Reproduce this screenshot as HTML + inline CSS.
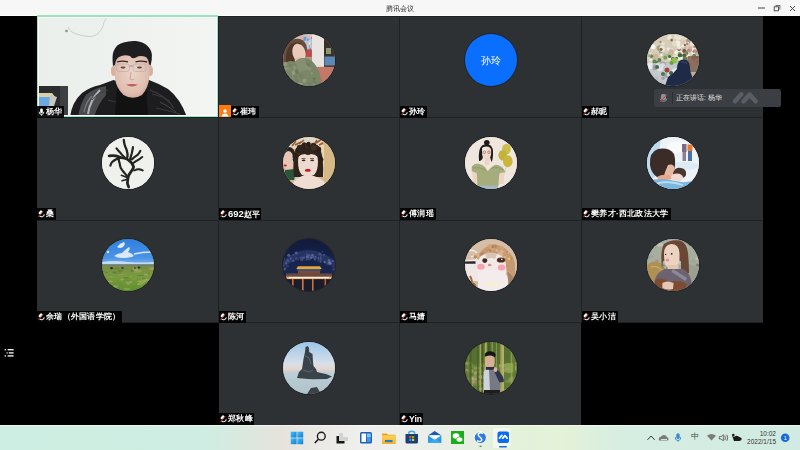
<!DOCTYPE html>
<html><head><meta charset="utf-8">
<style>
*{margin:0;padding:0;box-sizing:border-box}
html,body{width:800px;height:450px;overflow:hidden;background:#000;font-family:"Liberation Sans",sans-serif}
.abs{position:absolute}
#title{left:0;top:0;width:800px;height:16px;background:#f7f7f7;border-bottom:1.5px solid #fefefe}
#title .t{left:0;width:800px;top:3.5px;text-align:center;font-size:7px;line-height:9px;color:#1e1e1e;will-change:transform}
.cell{position:absolute;background:#2e3134}
.sep{position:absolute;background:#1f2124}
.lab{position:absolute;height:12px;background:rgba(0,0,0,0.92);color:#f2f2f2;font-size:8px;letter-spacing:0.3px;line-height:12px;white-space:nowrap;padding-left:9px;padding-right:0;overflow:hidden;will-change:transform;color:#fafafa;font-weight:bold}
.mic{position:absolute;left:1px;top:2px;width:7px;height:8px}
.av{position:absolute;width:52px;height:52px;border-radius:50%;overflow:hidden;box-shadow:0 0 0 1px #222428}
.av svg{display:block}
#task{left:0;top:425px;width:800px;height:25px;background:linear-gradient(90deg,#cdeee2 0%,#cfede2 26%,#e6e3dc 35%,#efefed 45%,#eaeee8 55%,#e4f0dc 62%,#e4f2d8 70%,#d6ede2 78%,#d1ebe2 100%)}
</style></head><body>
<div id="title" class="abs"><div class="abs t">腾讯会议</div>
<svg class="abs" style="left:0;top:0" width="800" height="15">
<line x1="758" y1="8" x2="765" y2="8" stroke="#444" stroke-width="1"/>
<rect x="774.2" y="6.8" width="4.3" height="4" fill="none" stroke="#444" stroke-width="0.9"/>
<path d="M775.6 5.5 h4.3 v4" fill="none" stroke="#444" stroke-width="0.8"/>
<path d="M790 6 l5 5 M795 6 l-5 5" stroke="#444" stroke-width="1"/>
</svg>
</div>

<!-- grid background separators -->
<div class="sep" style="left:37px;top:16px;width:726px;height:307px"></div>
<div class="sep" style="left:219px;top:323px;width:362px;height:102px"></div>

<!-- row 1 -->
<!--MAN--><div class="abs" style="left:37px;top:15px;width:181px;height:102px;overflow:hidden;background:#eef2ef">
<svg width="181" height="102" viewBox="37 15 181 102" style="display:block;filter:blur(0.5px)">
<defs>
<linearGradient id="mbg" x1="0" y1="0" x2="1" y2="0"><stop offset="0" stop-color="#eaefeb"/><stop offset="0.6" stop-color="#eff2ef"/><stop offset="1" stop-color="#f3f5f3"/></linearGradient>
<radialGradient id="face" cx="0.5" cy="0.45" r="0.6"><stop offset="0" stop-color="#ecd4ca"/><stop offset="0.75" stop-color="#e0beb0"/><stop offset="1" stop-color="#cfa494"/></radialGradient>
</defs>
<rect x="37" y="15" width="181" height="102" fill="url(#mbg)"/>
<path d="M68 27 Q70 33 80 35 Q90 38 96 35 Q103 30 104 22 Q106 18 109 16" stroke="#b4b9b6" stroke-width="0.6" fill="none"/>
<circle cx="66.5" cy="31" r="1.3" fill="#8a8e8c"/>
<!-- monitor -->
<rect x="37" y="86" width="31" height="31" fill="#2a2c2e"/>
<rect x="60" y="86" width="8" height="31" fill="#3c4042"/>
<path d="M37 93 L52 93 L56 98 L37 98Z" fill="#d8d0a8"/>
<rect x="37" y="97" width="13" height="9" fill="#6aa8e0"/>
<path d="M50 95 L57 97 L54 106 L49 106Z" fill="#c8c8c0"/>
<!-- jacket -->
<path d="M70 117 Q72 102 82 93 Q90 87 100 85 L113.5 80 L131 86 L149 80 Q160 84 168 89 Q180 98 187 117 Z" fill="#1d1d1f"/>
<path d="M78 117 Q80 104 86 95 Q94 88 106 86 L106 95 Q98 104 94 117Z" fill="#4a4b4e"/>
<path d="M88 114 Q90 100 100 90" stroke="#b0b1b4" stroke-width="2" fill="none"/>
<path d="M84 112 Q86 102 92 96" stroke="#7a7b7e" stroke-width="1.2" fill="none"/>
<path d="M92 100 Q98 92 108 90" stroke="#3c3d40" stroke-width="1" fill="none"/>
<path d="M150 90 Q166 96 174 108" stroke="#3e3f42" stroke-width="1.2" fill="none"/>
<path d="M108 100 Q120 104 128 102" stroke="#3a3b3e" stroke-width="1" fill="none"/>
<path d="M160 102 Q168 106 176 112" stroke="#48494c" stroke-width="1" fill="none"/>
<path d="M152 94 Q162 96 170 101 M156 108 Q166 110 180 114" stroke="#3a3b3e" stroke-width="1" fill="none"/>
<path d="M117 84 L131 98 L146 84 L148 117 L115 117Z" fill="#121213"/>
<!-- ears -->
<ellipse cx="113.5" cy="71" rx="2.5" ry="5" fill="#d8b0a0"/>
<ellipse cx="150.5" cy="71" rx="2.5" ry="5" fill="#d8b0a0"/>
<!-- face -->
<path d="M114.5 63 Q114.5 52 131 52 Q149.5 52 149.5 63 L149.5 76 Q148.5 88 142 95 Q133 100.5 123.5 95 Q116 88 115 78Z" fill="url(#face)"/>
<path d="M117 62 Q122 60.3 128 61.8 M135.5 61.8 Q141 60.3 147 62" stroke="#2e2624" stroke-width="1.3" fill="none"/>
<!-- hair -->
<path d="M113 66 Q111.8 56 113.5 51.6 Q116 44 123.5 42.4 Q130 40.5 136 41 Q144 42 147.6 46 Q151.5 50 151.9 54.5 Q152.2 60 150.5 66 L149 64 Q148.5 59 146 57 Q140 55 136 57.5 Q132 59.5 130 56 Q124 54 119 57 Q115.5 59 115 65 Z" fill="#1e1e20"/>

<!-- glasses -->
<rect x="116.5" y="64" width="13" height="7.5" rx="2.5" fill="none" stroke="#a8a8a8" stroke-width="0.7" opacity="0.8"/>
<rect x="133" y="64" width="13" height="7.5" rx="2.5" fill="none" stroke="#a8a8a8" stroke-width="0.7" opacity="0.8"/>
<line x1="129.5" y1="66" x2="133" y2="66" stroke="#8a8a8a" stroke-width="0.8"/>
<ellipse cx="123" cy="67.5" rx="2.5" ry="1" fill="#5a4a44"/>
<ellipse cx="139.5" cy="67.5" rx="2.5" ry="1" fill="#5a4a44"/>
<path d="M131 72 L130 79 Q132 80.5 134 79.5" stroke="#c49484" stroke-width="0.7" fill="none"/>
<path d="M126 84.8 Q132 83 138 84.8 Q132 88 126 84.8Z" fill="#bc5a58"/>
</svg>
<div class="abs" style="left:0;top:0;width:181px;height:102px;border:1px solid #98e4bb;border-top-width:2px;border-bottom-width:1.5px;box-shadow:inset 0 0 0 1px #fbfefc"></div>
</div><!--/MAN-->
<div class="cell" style="left:219px;top:17px;width:180px;height:100px"></div>
<div class="cell" style="left:400px;top:17px;width:181px;height:100px"></div>
<div class="cell" style="left:582px;top:17px;width:181px;height:100px"></div>
<!-- row 2 -->
<div class="cell" style="left:37px;top:118px;width:181px;height:102px"></div>
<div class="cell" style="left:219px;top:118px;width:180px;height:102px"></div>
<div class="cell" style="left:400px;top:118px;width:181px;height:102px"></div>
<div class="cell" style="left:582px;top:118px;width:181px;height:102px"></div>
<!-- row 3 -->
<div class="cell" style="left:37px;top:221px;width:181px;height:101px"></div>
<div class="cell" style="left:219px;top:221px;width:180px;height:101px"></div>
<div class="cell" style="left:400px;top:221px;width:181px;height:101px"></div>
<div class="cell" style="left:582px;top:221px;width:181px;height:101px"></div>
<!-- row 4 -->
<div class="cell" style="left:219px;top:323px;width:180px;height:102px"></div>
<div class="cell" style="left:400px;top:323px;width:181px;height:102px"></div>

<!-- AVATARS -->
<div id="avatars">
<div class="av" style="left:283px;top:34px;background:#a89888"><svg width="52" height="52" viewBox="0 0 52 52" style="filter:blur(0.5px);">
<rect x="0" y="0" width="52" height="52" fill="#a89888"/>
<rect x="10" y="0" width="20" height="16" fill="#c8c0c0"/>
<rect x="14.3" y="12.9" width="2.6" height="1.9" fill="#f0f0f0"/><rect x="24.9" y="7.6" width="2.1" height="1.8" fill="#f0f0f0"/><rect x="12.5" y="12.7" width="2.1" height="2.6" fill="#6a9ad8"/><rect x="23.8" y="4.7" width="2.7" height="2.4" fill="#6a9ad8"/><rect x="27.3" y="1.4" width="1.5" height="2.3" fill="#f0f0f0"/><rect x="23.7" y="14.6" width="2.6" height="2.3" fill="#e8a0b0"/><rect x="19.4" y="7.9" width="1.8" height="1.8" fill="#e0c860"/><rect x="24.9" y="14.3" width="2.9" height="2.1" fill="#8ac0e8"/><rect x="27.7" y="2.4" width="2.4" height="2.6" fill="#d87a88"/><rect x="14.1" y="5.7" width="2.6" height="2.6" fill="#f0f0f0"/><rect x="20.6" y="13.7" width="1.8" height="1.9" fill="#f0f0f0"/><rect x="26.4" y="8.1" width="2.4" height="1.6" fill="#e0c860"/><rect x="24.6" y="6.7" width="2.5" height="2.1" fill="#b8d0e8"/><rect x="25.2" y="11.3" width="1.6" height="2.5" fill="#6a9ad8"/><rect x="25.2" y="8.3" width="2.1" height="2.2" fill="#6a9ad8"/><rect x="20.0" y="5.3" width="2.8" height="2.4" fill="#8ac0e8"/><rect x="18.7" y="3.4" width="2.3" height="3.0" fill="#e8a0b0"/><rect x="15.4" y="13.9" width="2.3" height="2.1" fill="#d87a88"/><rect x="28.2" y="9.1" width="2.2" height="1.9" fill="#8ac0e8"/><rect x="22.4" y="11.2" width="2.1" height="2.8" fill="#b8d0e8"/><rect x="20.7" y="2.8" width="2.7" height="1.8" fill="#6a9ad8"/><rect x="20.2" y="6.1" width="2.3" height="2.9" fill="#f0f0f0"/><rect x="20.2" y="6.0" width="2.0" height="2.3" fill="#8ac0e8"/><rect x="25.4" y="5.6" width="2.4" height="2.7" fill="#b8d0e8"/><rect x="15.0" y="9.2" width="2.8" height="2.7" fill="#e8a0b0"/><rect x="26.5" y="14.0" width="1.5" height="2.9" fill="#6a9ad8"/><rect x="13.4" y="1.2" width="1.5" height="2.6" fill="#e0c860"/><rect x="16.6" y="12.2" width="1.8" height="1.9" fill="#e0c860"/><rect x="14.7" y="8.4" width="1.8" height="1.9" fill="#b8d0e8"/><rect x="17.0" y="10.8" width="2.2" height="1.7" fill="#d87a88"/><rect x="18.6" y="6.9" width="1.8" height="1.7" fill="#b8d0e8"/><rect x="20.7" y="3.9" width="2.4" height="2.7" fill="#6a9ad8"/><rect x="15.8" y="6.6" width="1.6" height="2.9" fill="#f0f0f0"/><rect x="24.0" y="10.5" width="2.3" height="1.8" fill="#b8d0e8"/><rect x="25.6" y="8.2" width="1.8" height="2.5" fill="#f0f0f0"/><rect x="23.5" y="12.2" width="2.5" height="2.1" fill="#b8d0e8"/><rect x="17.1" y="14.6" width="2.8" height="2.0" fill="#e8a0b0"/><rect x="13.3" y="13.8" width="1.9" height="1.7" fill="#8ac0e8"/><rect x="16.3" y="1.1" width="2.8" height="1.6" fill="#e8a0b0"/><rect x="15.7" y="13.6" width="2.2" height="2.7" fill="#e8a0b0"/>
<rect x="22.3" y="15.4" width="6.5" height="7.5" fill="#c04848"/>
<rect x="29" y="0" width="12" height="33" fill="#e8e4e0"/>
<rect x="41" y="0" width="11" height="33" fill="#3a3028"/>
<rect x="41.5" y="22.5" width="10.5" height="9" fill="#5a88b8"/>
<rect x="43" y="14" width="5" height="6" fill="#8a9a70"/>
<rect x="35" y="32.8" width="17" height="19.2" fill="#c67868"/>
<path d="M0.5 34 Q-1 18 4 9 Q10 4 17 5 Q23 7 24 14 Q23 24 20 32 Z" fill="#6a4c3a"/>
<path d="M3 30 Q2 16 8 10 Q14 7 18 9 L14 30Z" fill="#4e3628"/>
<ellipse cx="16" cy="19" rx="6.5" ry="9.5" fill="#eacbbb" transform="rotate(-15 16 19)"/>
<path d="M11.7 25 Q16 22 21.6 25 L21 30.3 L12 30.3 Z" fill="#dfbba8"/>
<path d="M0 52 L0 32 Q5 25 12 28 Q16 24 20 24 Q26 24 30 28 Q38 36 39 52 Z" fill="#7a8668"/>
<circle cx="27.3" cy="50.4" r="1.6" fill="#747e60" opacity="0.8"/><circle cx="4.7" cy="33.4" r="1.7" fill="#747e60" opacity="0.8"/><circle cx="18.3" cy="42.0" r="2.1" fill="#747e60" opacity="0.8"/><circle cx="16.3" cy="35.5" r="1.4" fill="#747e60" opacity="0.8"/><circle cx="2.7" cy="48.8" r="1.2" fill="#96a086" opacity="0.8"/><circle cx="22.3" cy="46.8" r="1.2" fill="#747e60" opacity="0.8"/><circle cx="20.4" cy="33.7" r="2.0" fill="#96a086" opacity="0.8"/><circle cx="32.2" cy="49.1" r="1.6" fill="#6c7658" opacity="0.8"/><circle cx="3.0" cy="30.4" r="1.2" fill="#6c7658" opacity="0.8"/><circle cx="9.7" cy="49.0" r="1.9" fill="#96a086" opacity="0.8"/><circle cx="12.1" cy="37.1" r="1.3" fill="#747e60" opacity="0.8"/><circle cx="16.4" cy="32.0" r="1.1" fill="#8a9678" opacity="0.8"/><circle cx="13.5" cy="37.9" r="2.2" fill="#6c7658" opacity="0.8"/><circle cx="14.3" cy="47.2" r="1.7" fill="#747e60" opacity="0.8"/><circle cx="15.9" cy="30.7" r="1.7" fill="#96a086" opacity="0.8"/><circle cx="10.8" cy="37.0" r="1.6" fill="#8a9678" opacity="0.8"/><circle cx="10.6" cy="39.1" r="1.9" fill="#96a086" opacity="0.8"/><circle cx="18.2" cy="29.3" r="1.1" fill="#8a9678" opacity="0.8"/><circle cx="30.4" cy="47.2" r="1.2" fill="#747e60" opacity="0.8"/><circle cx="13.9" cy="32.6" r="1.8" fill="#6c7658" opacity="0.8"/><circle cx="5.6" cy="45.4" r="2.1" fill="#747e60" opacity="0.8"/><circle cx="21.5" cy="46.7" r="2.0" fill="#96a086" opacity="0.8"/><circle cx="13.0" cy="44.7" r="1.2" fill="#96a086" opacity="0.8"/><circle cx="2.3" cy="29.9" r="2.2" fill="#96a086" opacity="0.8"/><circle cx="13.3" cy="45.0" r="1.5" fill="#747e60" opacity="0.8"/><circle cx="24.8" cy="30.4" r="2.2" fill="#747e60" opacity="0.8"/><circle cx="7.5" cy="31.4" r="1.7" fill="#747e60" opacity="0.8"/><circle cx="10.9" cy="43.6" r="1.6" fill="#96a086" opacity="0.8"/><circle cx="11.8" cy="33.4" r="2.0" fill="#8a9678" opacity="0.8"/><circle cx="18.1" cy="50.6" r="1.8" fill="#96a086" opacity="0.8"/><circle cx="16.1" cy="49.7" r="1.4" fill="#96a086" opacity="0.8"/><circle cx="23.3" cy="33.1" r="1.7" fill="#96a086" opacity="0.8"/><circle cx="4.8" cy="34.4" r="1.7" fill="#8a9678" opacity="0.8"/><circle cx="2.6" cy="34.4" r="1.3" fill="#8a9678" opacity="0.8"/><circle cx="26.4" cy="34.9" r="1.9" fill="#8a9678" opacity="0.8"/><circle cx="11.8" cy="43.0" r="2.0" fill="#747e60" opacity="0.8"/><circle cx="28.8" cy="39.3" r="1.1" fill="#96a086" opacity="0.8"/><circle cx="25.9" cy="30.7" r="1.2" fill="#6c7658" opacity="0.8"/><circle cx="31.6" cy="50.7" r="1.4" fill="#8a9678" opacity="0.8"/><circle cx="31.2" cy="44.6" r="1.7" fill="#6c7658" opacity="0.8"/>
<path d="M12 28 Q16 24 22 25 L24 36 L16 38Z" fill="#849070"/>
</svg></div>
<div class="av" style="left:465px;top:34px;background:#0a6efe;color:#fff;font-size:10px;line-height:53.5px;text-align:center;will-change:transform">孙玲</div>
<div class="av" style="left:647px;top:34px;background:#b8b0a0"><svg width="52" height="52" viewBox="0 0 52 52" style="filter:blur(0.5px);">
<rect width="52" height="52" fill="#b8b0a0"/>
<rect x="0" y="0" width="52" height="28" fill="#d6cdb8"/>
<circle cx="12.4" cy="14.1" r="2.8" fill="#a89a80"/><circle cx="24.7" cy="15.1" r="1.2" fill="#e8e0d0"/><circle cx="43.5" cy="6.7" r="1.5" fill="#f4efe4"/><circle cx="37.3" cy="14.1" r="2.1" fill="#c8b8a0"/><circle cx="33.2" cy="3.9" r="1.5" fill="#f0ece4"/><circle cx="48.1" cy="10.1" r="2.4" fill="#efe8d8"/><circle cx="3.3" cy="19.7" r="1.3" fill="#e8e0d0"/><circle cx="40.6" cy="21.4" r="2.1" fill="#f8f4ec"/><circle cx="37.4" cy="22.8" r="1.9" fill="#7a6c58"/><circle cx="41.6" cy="11.6" r="2.8" fill="#d8ccb4"/><circle cx="5.1" cy="3.5" r="1.7" fill="#f4efe4"/><circle cx="34.9" cy="20.3" r="2.0" fill="#f8f4ec"/><circle cx="43.3" cy="14.9" r="2.3" fill="#c8b8a0"/><circle cx="30.4" cy="23.5" r="2.8" fill="#f0ece4"/><circle cx="1.5" cy="7.3" r="2.4" fill="#e8e0d0"/><circle cx="8.5" cy="22.4" r="2.8" fill="#c8b8a0"/><circle cx="29.6" cy="18.6" r="2.3" fill="#f4efe4"/><circle cx="51.4" cy="6.9" r="1.3" fill="#e4dcc8"/><circle cx="44.4" cy="25.7" r="1.8" fill="#e4dcc8"/><circle cx="3.5" cy="23.3" r="1.7" fill="#efe8d8"/><circle cx="40.0" cy="22.7" r="2.3" fill="#efe8d8"/><circle cx="39.6" cy="9.8" r="1.8" fill="#e8e0d0"/><circle cx="45.8" cy="25.5" r="1.6" fill="#c8b8a0"/><circle cx="1.9" cy="0.2" r="2.3" fill="#e4dcc8"/><circle cx="1.6" cy="5.1" r="1.7" fill="#7a6c58"/><circle cx="13.7" cy="17.9" r="1.8" fill="#a89a80"/><circle cx="49.9" cy="23.3" r="1.9" fill="#7a6c58"/><circle cx="45.2" cy="10.0" r="2.4" fill="#e8e0d0"/><circle cx="5.3" cy="25.3" r="1.7" fill="#c8b8a0"/><circle cx="33.0" cy="18.6" r="2.0" fill="#f8f4ec"/><circle cx="13.4" cy="7.9" r="1.2" fill="#a89a80"/><circle cx="21.6" cy="15.1" r="1.9" fill="#efe8d8"/><circle cx="30.6" cy="3.5" r="2.3" fill="#f0ece4"/><circle cx="24.2" cy="17.7" r="2.3" fill="#a89a80"/><circle cx="14.5" cy="12.7" r="1.3" fill="#e8e0d0"/><circle cx="35.2" cy="25.0" r="2.3" fill="#f8f4ec"/><circle cx="15.5" cy="15.6" r="1.9" fill="#d8ccb4"/><circle cx="16.3" cy="9.6" r="1.7" fill="#e8e0d0"/><circle cx="40.9" cy="2.7" r="2.9" fill="#efe8d8"/><circle cx="35.6" cy="3.4" r="1.6" fill="#c8b8a0"/><circle cx="41.8" cy="6.2" r="2.4" fill="#d8ccb4"/><circle cx="33.8" cy="2.5" r="1.8" fill="#e8e0d0"/><circle cx="17.4" cy="21.7" r="2.7" fill="#b8c0a0"/><circle cx="50.0" cy="2.1" r="1.6" fill="#f0ece4"/><circle cx="29.6" cy="7.0" r="1.3" fill="#e4dcc8"/><circle cx="49.8" cy="8.2" r="1.5" fill="#e8e0d0"/><circle cx="14.5" cy="21.0" r="1.4" fill="#f0ece4"/><circle cx="32.2" cy="15.3" r="1.7" fill="#7a6c58"/><circle cx="41.3" cy="7.1" r="2.3" fill="#a89a80"/><circle cx="15.1" cy="14.8" r="2.9" fill="#efe8d8"/><circle cx="8.1" cy="0.1" r="3.0" fill="#e8e0d0"/><circle cx="22.6" cy="24.7" r="1.3" fill="#f4efe4"/><circle cx="23.7" cy="19.6" r="2.9" fill="#c8b8a0"/><circle cx="28.3" cy="23.1" r="2.7" fill="#e4dcc8"/><circle cx="50.5" cy="3.1" r="1.3" fill="#f4efe4"/><circle cx="47.0" cy="18.0" r="2.8" fill="#f4efe4"/><circle cx="46.8" cy="15.0" r="2.1" fill="#efe8d8"/><circle cx="6.3" cy="13.1" r="2.4" fill="#f4efe4"/><circle cx="27.3" cy="10.8" r="1.4" fill="#e8e0d0"/><circle cx="6.5" cy="25.3" r="2.1" fill="#c8b8a0"/><circle cx="40.7" cy="9.1" r="1.4" fill="#f4efe4"/><circle cx="46.2" cy="3.1" r="2.6" fill="#f4efe4"/><circle cx="47.9" cy="21.0" r="2.1" fill="#efe8d8"/><circle cx="29.7" cy="10.4" r="1.6" fill="#f8f4ec"/><circle cx="32.1" cy="13.5" r="2.1" fill="#efe8d8"/><circle cx="40.4" cy="0.0" r="2.6" fill="#efe8d8"/><circle cx="2.4" cy="1.3" r="3.0" fill="#b8c0a0"/><circle cx="44.4" cy="2.2" r="2.1" fill="#c8b8a0"/><circle cx="8.2" cy="1.9" r="2.4" fill="#7a6c58"/><circle cx="30.5" cy="9.4" r="3.0" fill="#f4efe4"/><circle cx="22.3" cy="3.3" r="2.5" fill="#efe8d8"/><circle cx="19.8" cy="2.1" r="1.3" fill="#d8ccb4"/><circle cx="24.0" cy="16.9" r="1.9" fill="#c8b8a0"/><circle cx="41.7" cy="16.2" r="1.3" fill="#7a6c58"/><circle cx="32.6" cy="19.8" r="2.0" fill="#a89a80"/><circle cx="36.1" cy="12.0" r="1.6" fill="#f4efe4"/><circle cx="14.0" cy="15.3" r="1.6" fill="#7a6c58"/><circle cx="6.8" cy="0.7" r="1.9" fill="#a89a80"/><circle cx="46.7" cy="20.6" r="1.4" fill="#f8f4ec"/><circle cx="35.9" cy="24.4" r="2.7" fill="#f0ece4"/><circle cx="27.6" cy="9.8" r="2.5" fill="#e4dcc8"/><circle cx="29.3" cy="2.7" r="2.5" fill="#e8e0d0"/><circle cx="24.6" cy="6.1" r="1.3" fill="#7a6c58"/><circle cx="4.8" cy="2.6" r="1.5" fill="#7a6c58"/><circle cx="1.2" cy="21.9" r="1.2" fill="#e4dcc8"/><circle cx="6.0" cy="12.5" r="2.2" fill="#f8f4ec"/><circle cx="41.5" cy="0.9" r="2.1" fill="#e8e0d0"/><circle cx="37.2" cy="2.8" r="2.9" fill="#e4dcc8"/><circle cx="3.2" cy="8.4" r="1.5" fill="#e8e0d0"/><circle cx="4.0" cy="26.0" r="1.6" fill="#f0ece4"/><circle cx="45.9" cy="23.6" r="1.3" fill="#7a5040"/><circle cx="45.6" cy="28.4" r="1.5" fill="#d0a0a0"/><circle cx="37.3" cy="17.0" r="2.0" fill="#7a5040"/><circle cx="51.5" cy="14.8" r="1.9" fill="#d0a0a0"/><circle cx="46.8" cy="17.4" r="1.2" fill="#7a5040"/><circle cx="42.4" cy="27.1" r="1.1" fill="#c89090"/><circle cx="48.0" cy="27.8" r="2.1" fill="#d0a0a0"/><circle cx="45.4" cy="26.3" r="1.3" fill="#c89090"/><circle cx="39.2" cy="19.2" r="2.1" fill="#5a8a4a"/><circle cx="49.6" cy="18.0" r="1.8" fill="#5a8a4a"/><circle cx="49.7" cy="19.5" r="1.7" fill="#d0a0a0"/><circle cx="40.3" cy="9.7" r="1.3" fill="#b87878"/><circle cx="48.9" cy="9.2" r="1.4" fill="#d0a0a0"/><circle cx="41.2" cy="24.1" r="1.5" fill="#c89090"/><circle cx="47.2" cy="22.2" r="1.6" fill="#c89090"/><circle cx="49.4" cy="25.4" r="1.0" fill="#d0a0a0"/><circle cx="51.9" cy="5.9" r="1.9" fill="#7a5040"/><circle cx="50.1" cy="5.2" r="2.1" fill="#c89090"/><circle cx="46.4" cy="24.2" r="2.2" fill="#b87878"/><circle cx="49.7" cy="10.3" r="1.9" fill="#c89090"/><circle cx="38.2" cy="20.2" r="2.1" fill="#b87878"/><circle cx="40.1" cy="26.5" r="1.2" fill="#5a8a4a"/><circle cx="37.5" cy="24.8" r="1.1" fill="#b87878"/><circle cx="49.3" cy="11.6" r="1.5" fill="#5a8a4a"/><circle cx="47.7" cy="12.8" r="1.4" fill="#b87878"/><circle cx="43.0" cy="16.6" r="1.8" fill="#c89090"/><circle cx="47.9" cy="16.7" r="1.7" fill="#c89090"/><circle cx="37.9" cy="11.1" r="1.1" fill="#7a5040"/><circle cx="50.2" cy="27.6" r="1.6" fill="#b87878"/><circle cx="47.2" cy="21.6" r="1.9" fill="#5a8a4a"/><circle cx="11.8" cy="28.1" r="2.3" fill="#d8d8c8"/><circle cx="32.7" cy="21.3" r="1.9" fill="#3a6a3a"/><circle cx="21.4" cy="21.4" r="1.7" fill="#a0b888"/><circle cx="2.4" cy="23.5" r="1.8" fill="#d8d8c8"/><circle cx="7.3" cy="27.7" r="1.2" fill="#d8d8c8"/><circle cx="14.8" cy="31.0" r="1.2" fill="#a0b888"/><circle cx="37.3" cy="21.7" r="1.9" fill="#3a6a3a"/><circle cx="26.0" cy="25.0" r="1.9" fill="#3a6a3a"/><circle cx="18.3" cy="23.7" r="2.0" fill="#7aa060"/><circle cx="4.3" cy="22.2" r="1.8" fill="#6a7a58"/><circle cx="29.6" cy="24.3" r="1.4" fill="#3a6a3a"/><circle cx="2.1" cy="21.6" r="1.7" fill="#a0b888"/><circle cx="9.9" cy="29.2" r="2.2" fill="#3a6a3a"/><circle cx="37.8" cy="25.4" r="1.5" fill="#5a8a48"/><circle cx="33.9" cy="21.3" r="1.8" fill="#3a6a3a"/><circle cx="27.3" cy="26.8" r="1.2" fill="#d8d8c8"/><circle cx="27.9" cy="26.8" r="2.0" fill="#d8d8c8"/><circle cx="32.6" cy="29.0" r="1.9" fill="#6a7a58"/><circle cx="34.4" cy="29.6" r="1.7" fill="#6a7a58"/><circle cx="22.7" cy="22.4" r="1.5" fill="#3a6a3a"/><circle cx="11.7" cy="30.1" r="2.2" fill="#a0b888"/><circle cx="38.0" cy="24.6" r="2.3" fill="#6a7a58"/><circle cx="12.4" cy="26.0" r="2.0" fill="#6a7a58"/><circle cx="12.0" cy="30.3" r="1.0" fill="#a0b888"/><circle cx="7.6" cy="27.6" r="2.1" fill="#5a8a48"/>
<path d="M0 30 L32 28 L32 52 L0 52 Z" fill="#c4c8cc"/>
<circle cx="20.5" cy="40.8" r="2.8" fill="#c8ccd0"/><circle cx="7.6" cy="47.2" r="1.6" fill="#b8bcc0"/><circle cx="16.0" cy="44.2" r="1.7" fill="#a0a4a8"/><circle cx="9.9" cy="44.5" r="1.8" fill="#b8bcc0"/><circle cx="24.2" cy="43.7" r="1.6" fill="#d8dce0"/><circle cx="19.3" cy="41.1" r="2.6" fill="#a0a4a8"/><circle cx="28.0" cy="37.1" r="2.9" fill="#e8eaec"/><circle cx="5.8" cy="48.9" r="3.1" fill="#c8ccd0"/><circle cx="3.0" cy="31.8" r="3.5" fill="#e8eaec"/><circle cx="7.7" cy="31.4" r="2.4" fill="#b8bcc0"/><circle cx="23.2" cy="40.7" r="3.1" fill="#d8dce0"/><circle cx="13.4" cy="48.6" r="2.3" fill="#b8bcc0"/><circle cx="15.3" cy="31.5" r="1.9" fill="#a0a4a8"/><circle cx="15.7" cy="30.5" r="3.0" fill="#a0a4a8"/><circle cx="13.2" cy="34.0" r="2.9" fill="#d8dce0"/><circle cx="12.3" cy="38.2" r="2.2" fill="#c8ccd0"/><circle cx="13.3" cy="51.3" r="2.0" fill="#b8bcc0"/><circle cx="12.3" cy="48.8" r="1.9" fill="#c8ccd0"/><circle cx="7.9" cy="33.8" r="2.5" fill="#a0a4a8"/><circle cx="19.8" cy="33.1" r="1.8" fill="#c8ccd0"/><circle cx="15.7" cy="31.3" r="2.3" fill="#d8dce0"/><circle cx="10.9" cy="30.7" r="2.0" fill="#d8dce0"/><circle cx="3.1" cy="40.9" r="2.0" fill="#b8bcc0"/><circle cx="12.9" cy="34.2" r="2.7" fill="#e8eaec"/><circle cx="11.7" cy="32.7" r="3.1" fill="#d8dce0"/>
<circle cx="20" cy="36" r="2.5" fill="#a84040"/><circle cx="24" cy="39" r="2" fill="#3a6a3a"/><circle cx="16" cy="40" r="2" fill="#4a7a48"/><circle cx="10" cy="33" r="2" fill="#4a6a40"/>
<rect x="41" y="22" width="11" height="16" fill="#7a5a48" opacity="0.75"/>
<path d="M18 52 L21 43 Q27 39 30 35 Q30 25.5 36.5 25.5 Q42.5 26 42.8 32 Q43 38 45 42 L47 52Z" fill="#1f2a48"/>
<path d="M34 28 Q38 27 40 30" stroke="#3a4a70" stroke-width="1.2" fill="none"/>
<circle cx="27.5" cy="26.5" r="3" fill="#90c050"/><circle cx="24.5" cy="29" r="2" fill="#6aa040"/>
</svg></div>
<div class="av" style="left:102px;top:137px;background:#eef1ec"><svg width="52" height="52" viewBox="0 0 52 52" style="filter:blur(0.5px);">
<rect width="52" height="52" fill="#eef1ec"/>
<g stroke="#242422" stroke-linecap="round" stroke-linejoin="round" fill="none">
<path d="M26.7 50 Q25 46 25.5 44.5 Q26 40 26.7 38.3 Q28.5 35.5 29.8 33.5 Q31.5 31 31.6 29.8 Q30 26 28.6 24.9 Q26 22.5 24.3 21.8 Q21 20.6 18.8 20.6 Q16 19.5 13.9 18.8 Q10 18.5 7.2 18.8" stroke-width="2.8"/>
<path d="M18.8 20.6 Q13 22 10.2 24.9 Q8.8 26.5 8.4 28.6" stroke-width="2.2"/>
<path d="M16.5 21 Q17 25 17.6 26.1 Q18 29 18.8 31 Q20.5 34 22.4 35.9 Q24.5 38.5 26.1 40.2" stroke-width="2.2"/>
<path d="M21.8 2.9 Q22 6 23 9 Q24.5 12 24.9 13.9 Q25.8 17 25.5 19.4 Q25 21 24.3 21.8" stroke-width="2.3"/>
<path d="M28 22.4 Q29 19 29.8 16.3 Q30.5 13 31 10.2" stroke-width="2.2"/>
<path d="M14.5 11.4 Q16.5 14 18.8 16.3 Q20.5 18.5 22.4 20" stroke-width="2.2"/>
<path d="M29.8 22.4 Q33 19.5 35.9 17.6 Q37.5 15.5 38.3 13.9" stroke-width="2.2"/>
<path d="M31 26.1 Q34 24 37.1 22.4 Q39 21 40.2 20" stroke-width="2.1"/>
<path d="M32.2 33.5 Q35 32 37.1 32.2 Q39.5 32.5 40.8 33.5" stroke-width="1.9"/>
<path d="M19.4 38.3 Q22 39.5 24.3 40.2" stroke-width="1.6"/>
<path d="M20 43.8 Q23 43 25.5 42" stroke-width="1.5"/>
</g>
</svg></div>
<div class="av" style="left:283px;top:137px;background:#d4b88c"><svg width="52" height="52" viewBox="0 0 52 52" style="filter:blur(0.5px);">
<rect width="52" height="52" fill="#d4b88c"/>
<rect x="0" y="0" width="52" height="12" fill="#e2d6c4"/>
<rect x="37.8" y="5" width="14.2" height="38" fill="#d6b886"/>
<rect x="38" y="8" width="3" height="32" fill="#e8d4b0"/>
<path d="M9 9 L13 4 M12 8 L18 5 M16 7 L21 3 M31 8 L34 3 M33 6 L39 2 M36 8 L40 6" stroke="#9a5a34" stroke-width="1.6"/>
<ellipse cx="6" cy="17" rx="6" ry="7" fill="#2e221c"/>
<ellipse cx="5.5" cy="24" rx="5.5" ry="10" fill="#e6c6b6"/>
<ellipse cx="2.2" cy="28.5" rx="1.6" ry="1" fill="#c82020"/>
<path d="M2 33 L12 32 L12 43 L2 43 Z" fill="#2a5438"/>
<path d="M12 36 L15 38 L15 46 L11 46Z" fill="#c8c8c4"/>
<path d="M11 40 Q9 22 13 12 Q24 5 37 11 Q41 22 40 40 Z" fill="#2e221a"/>
<circle cx="30.3" cy="8.5" r="2.8" fill="#3e2e24"/><circle cx="31.2" cy="9.7" r="2.8" fill="#30241c"/><circle cx="31.5" cy="8.7" r="1.9" fill="#2a1f18"/><circle cx="36.4" cy="18.0" r="1.9" fill="#30241c"/><circle cx="13.5" cy="23.5" r="2.1" fill="#2a1f18"/><circle cx="13.0" cy="16.3" r="2.0" fill="#3e2e24"/><circle cx="22.9" cy="9.2" r="3.0" fill="#30241c"/><circle cx="15.3" cy="14.9" r="3.0" fill="#30241c"/><circle cx="16.1" cy="10.5" r="2.4" fill="#3e2e24"/><circle cx="29.8" cy="10.1" r="3.0" fill="#30241c"/><circle cx="38.2" cy="22.6" r="2.2" fill="#2a1f18"/><circle cx="21.1" cy="7.3" r="2.1" fill="#2a1f18"/><circle cx="17.1" cy="10.9" r="1.8" fill="#3e2e24"/><circle cx="32.3" cy="12.3" r="2.2" fill="#2a1f18"/><circle cx="24.2" cy="8.5" r="2.4" fill="#3e2e24"/><circle cx="14.5" cy="16.2" r="2.9" fill="#3e2e24"/><circle cx="19.3" cy="9.8" r="2.5" fill="#2a1f18"/><circle cx="19.4" cy="9.2" r="1.8" fill="#30241c"/><circle cx="33.3" cy="11.1" r="2.9" fill="#30241c"/><circle cx="35.3" cy="12.3" r="2.9" fill="#2a1f18"/><circle cx="25.6" cy="6.8" r="2.1" fill="#2a1f18"/><circle cx="12.4" cy="18.8" r="2.8" fill="#2a1f18"/><circle cx="11.6" cy="22.5" r="1.9" fill="#2a1f18"/><circle cx="25.5" cy="8.3" r="2.0" fill="#2a1f18"/><circle cx="37.3" cy="20.5" r="2.2" fill="#2a1f18"/><circle cx="16.9" cy="10.3" r="2.6" fill="#3e2e24"/><circle cx="33.2" cy="9.7" r="2.0" fill="#30241c"/><circle cx="12.6" cy="20.2" r="2.9" fill="#30241c"/><circle cx="15.2" cy="13.2" r="2.8" fill="#2a1f18"/><circle cx="30.7" cy="10.7" r="3.0" fill="#3e2e24"/><circle cx="12.8" cy="22.6" r="2.8" fill="#30241c"/><circle cx="37.4" cy="23.3" r="2.0" fill="#2a1f18"/><circle cx="13.2" cy="19.1" r="2.0" fill="#2a1f18"/><circle cx="17.1" cy="11.4" r="3.0" fill="#30241c"/>
<path d="M15 24 Q15 14 25 14.5 Q35 14 35 24 Q35 34 31 38 Q25 41 19 38 Q15 34 15 24Z" fill="#eedad0"/>
<path d="M15 20 Q18 13 25 13 Q32 13 35 20 Q32 17 28 17 Q25 19 22 17 Q18 17 15 20Z" fill="#30241c"/>
<path d="M18.5 21.5 h4 M27 21.5 h4" stroke="#5a4038" stroke-width="0.8"/>
<ellipse cx="20.6" cy="23.3" rx="1.9" ry="0.9" fill="#3a2a24"/><ellipse cx="29.2" cy="23.3" rx="1.9" ry="0.9" fill="#3a2a24"/>
<ellipse cx="24.8" cy="33.4" rx="3" ry="1.3" fill="#c41818"/>
<path d="M8 52 Q10 42 19 39 L31 39 Q42 42 46 52 Z" fill="#f0dcd0"/>
</svg></div>
<div class="av" style="left:465px;top:137px;background:#efe7de"><svg width="52" height="52" viewBox="0 0 52 52" style="filter:blur(0.5px);">
<rect width="52" height="52" fill="#efe7de"/>
<path d="M38 29 L35 38 M41 29 L40 36" stroke="#c8b8a8" stroke-width="0.5"/>
<ellipse cx="41.5" cy="12" rx="4.4" ry="5.2" fill="#cdbd4a"/>
<ellipse cx="37.8" cy="18.2" rx="4.4" ry="5.2" fill="#c3b23c"/>
<ellipse cx="42.8" cy="24.2" rx="4.8" ry="6" fill="#c9b63e"/>
<ellipse cx="21.8" cy="5.5" rx="2.8" ry="2.6" fill="#1c1a1a"/>
<path d="M14 24 Q13 12 17 8.5 Q21 6.5 25 8 Q28.5 10 28 18 Q27.5 24 26.5 25 L25 20 L18 20 Q17 24 14 24Z" fill="#1e1b1b"/>
<path d="M17 14 Q17 9.5 21.5 9.5 Q26.2 9.5 26.2 14 L26 18 Q25 21.8 21.5 21.8 Q18 21.8 17.2 18Z" fill="#f0dacb"/>
<path d="M17 11 Q19.5 9 22 11 L18.5 16 Z" fill="#f2eeea"/>
<circle cx="19.3" cy="15.2" r="1.3" fill="none" stroke="#8a5a44" stroke-width="0.6"/><circle cx="24" cy="15.2" r="1.3" fill="none" stroke="#8a5a44" stroke-width="0.6"/>
<rect x="19.5" y="21" width="5" height="7" fill="#eed4c4"/>
<path d="M6.7 29.5 Q9 26.5 12.9 26.6 Q18 28 20 30 Q21.5 33 22.9 34 Q25 31.5 28 29 Q30 27.5 32.8 27.9 Q38 29 40.3 35.3 L35 36 L34 40 L33.5 49 L11.7 49 L11.5 40 L10 36 L6.7 34Z" fill="#a5ad7d"/>
<path d="M7 34.5 L11.8 36 L12.5 47.7 L8.5 47.7Z" fill="#eed2c2"/>
<path d="M34.5 36.5 L39.5 36 L38.5 47 L34 47Z" fill="#eed2c2"/>
<path d="M8 31 Q14 29.5 21 33 M26 31.5 Q32 29 39 33" stroke="#8e9668" stroke-width="0.9" fill="none"/>
<rect x="13" y="48.5" width="20" height="3.5" fill="#a6b6c4"/>
</svg></div>
<div class="av" style="left:647px;top:137px;background:#eef3f7"><svg width="52" height="52" viewBox="0 0 52 52" style="filter:blur(0.5px);">
<rect width="52" height="52" fill="#eef3f7"/>
<path d="M0 8 Q6 2 14 2 L8 40 L0 44 Z" fill="#bcdaf0"/>
<ellipse cx="30" cy="10" rx="10" ry="6" fill="#f8fafc"/>
<rect x="35" y="7" width="4.5" height="8" fill="#7a6e7e"/><rect x="35.5" y="15" width="3.5" height="9" fill="#8a8290"/>
<rect x="40.5" y="7.5" width="5" height="6.5" fill="#e87a34"/><rect x="41" y="14" width="4" height="10" fill="#4a70a8"/>
<ellipse cx="36" cy="29" rx="16" ry="4" fill="#dcebf4"/>
<path d="M3 28 Q2 15 11 12 Q22 10 27 17 Q29 24 27.5 32 Q26 38 22 40 L10 40 Q4 36 3 28Z" fill="#3c2c28"/>
<path d="M21 28 Q27 26 27.8 32 Q27 38 24 41 L16 42 Q18 34 21 28Z" fill="#e6b8a2"/>
<path d="M10 40 Q14 37 22 38 L26 42 L12 44Z" fill="#e8a888"/>
<path d="M26 36 Q28 30 34 31 Q40 32 39 38 Q38 41 34 41 L28 41Z" fill="#4a3630"/>
<ellipse cx="30" cy="40.5" rx="6" ry="4" fill="#f2dad0"/>
<path d="M0 44 Q14 40 28 44 Q40 47 52 42 L52 52 L0 52 Z" fill="#7ab6de"/>
<path d="M8 47 Q20 43 36 48" stroke="#c0e0f2" stroke-width="1.8" fill="none"/>
</svg></div>
<div class="av" style="left:102px;top:239px;background:#5f9030"><svg width="52" height="52" viewBox="0 0 52 52" style="filter:blur(0.5px);">
<defs><linearGradient id="sky8" x1="0" y1="0" x2="0" y2="1"><stop offset="0" stop-color="#2f7ee2"/><stop offset="0.7" stop-color="#4a94e6"/><stop offset="1" stop-color="#8cc0ee"/></linearGradient>
<linearGradient id="gr8" x1="0" y1="0" x2="0" y2="1"><stop offset="0" stop-color="#7a8a48"/><stop offset="0.4" stop-color="#7a9a40"/><stop offset="1" stop-color="#5f9030"/></linearGradient></defs>
<rect width="52" height="27" fill="url(#sky8)"/>
<path d="M12 17 Q16 14 20 14 Q24 10 27 8 Q29 9 26 13 Q30 14 32 17 Q28 19 20 19 Q15 19 12 17Z" fill="#eaf2fa" opacity="0.9"/>
<path d="M15 8 Q18 4 22 3 Q24 5 21 8 Q18 10 15 8Z" fill="#e0ecf8"/>
<path d="M32 15 Q40 13 50 13" stroke="#d8e6f6" stroke-width="1.4" fill="none"/>
<circle cx="6" cy="13" r="1.3" fill="#d0e0f4"/>
<path d="M0 23 Q12 21 26 23 Q40 24 52 23 L52 26 L0 26Z" fill="#d4e4f2" opacity="0.85"/>
<rect x="0" y="25.4" width="52" height="1.2" fill="#4a5a40"/>
<rect x="0" y="26.6" width="52" height="25.4" fill="url(#gr8)"/>
<ellipse cx="11.8" cy="51.1" rx="1.8" ry="1.2" fill="#8aa848" opacity="0.7"/><ellipse cx="7.1" cy="47.5" rx="2.8" ry="1.0" fill="#8aa848" opacity="0.7"/><ellipse cx="23.9" cy="38.9" rx="2.7" ry="0.8" fill="#5a8030" opacity="0.7"/><ellipse cx="4.7" cy="33.6" rx="1.5" ry="0.8" fill="#5a8030" opacity="0.7"/><ellipse cx="24.7" cy="49.9" rx="3.3" ry="1.2" fill="#8aa848" opacity="0.7"/><ellipse cx="51.6" cy="29.5" rx="3.1" ry="0.9" fill="#8aa848" opacity="0.7"/><ellipse cx="17.6" cy="44.6" rx="2.7" ry="1.2" fill="#6a9038" opacity="0.7"/><ellipse cx="30.2" cy="31.4" rx="1.7" ry="1.5" fill="#5a8030" opacity="0.7"/><ellipse cx="36.5" cy="31.6" rx="3.7" ry="1.0" fill="#a0a860" opacity="0.7"/><ellipse cx="45.8" cy="34.9" rx="2.4" ry="1.4" fill="#6a9038" opacity="0.7"/><ellipse cx="8.2" cy="42.4" rx="2.8" ry="0.9" fill="#9ab058" opacity="0.7"/><ellipse cx="49.4" cy="48.2" rx="2.8" ry="0.8" fill="#6a9038" opacity="0.7"/><ellipse cx="18.5" cy="34.8" rx="3.1" ry="1.3" fill="#a0a860" opacity="0.7"/><ellipse cx="47.5" cy="41.1" rx="2.4" ry="1.4" fill="#9ab058" opacity="0.7"/><ellipse cx="17.8" cy="34.4" rx="2.6" ry="0.9" fill="#5a8030" opacity="0.7"/><ellipse cx="9.1" cy="37.5" rx="1.9" ry="1.2" fill="#8aa848" opacity="0.7"/><ellipse cx="10.5" cy="46.4" rx="2.3" ry="0.6" fill="#5a8030" opacity="0.7"/><ellipse cx="17.8" cy="32.1" rx="2.6" ry="0.8" fill="#5a8030" opacity="0.7"/><ellipse cx="29.3" cy="37.8" rx="1.7" ry="0.7" fill="#8aa848" opacity="0.7"/><ellipse cx="1.8" cy="43.9" rx="3.4" ry="1.1" fill="#6a9038" opacity="0.7"/><ellipse cx="42.0" cy="40.1" rx="3.3" ry="1.5" fill="#8aa848" opacity="0.7"/><ellipse cx="9.9" cy="49.9" rx="2.4" ry="1.2" fill="#8aa848" opacity="0.7"/><ellipse cx="38.7" cy="36.4" rx="3.9" ry="0.6" fill="#5a8030" opacity="0.7"/><ellipse cx="10.9" cy="49.0" rx="1.6" ry="1.5" fill="#a0a860" opacity="0.7"/><ellipse cx="8.9" cy="36.1" rx="2.6" ry="0.7" fill="#6a9038" opacity="0.7"/><ellipse cx="31.5" cy="39.9" rx="2.7" ry="0.7" fill="#8aa848" opacity="0.7"/><ellipse cx="5.6" cy="45.3" rx="3.1" ry="1.2" fill="#a0a860" opacity="0.7"/><ellipse cx="37.7" cy="45.2" rx="2.7" ry="1.0" fill="#9ab058" opacity="0.7"/><ellipse cx="23.7" cy="29.2" rx="1.6" ry="0.7" fill="#6a9038" opacity="0.7"/><ellipse cx="37.7" cy="45.0" rx="3.0" ry="0.6" fill="#9ab058" opacity="0.7"/><ellipse cx="43.1" cy="40.7" rx="3.9" ry="1.3" fill="#a0a860" opacity="0.7"/><ellipse cx="26.1" cy="44.9" rx="2.0" ry="0.8" fill="#a0a860" opacity="0.7"/><ellipse cx="20.0" cy="40.5" rx="2.0" ry="0.9" fill="#9ab058" opacity="0.7"/><ellipse cx="47.3" cy="45.8" rx="3.8" ry="1.5" fill="#6a9038" opacity="0.7"/><ellipse cx="32.9" cy="29.9" rx="2.5" ry="1.3" fill="#9ab058" opacity="0.7"/><ellipse cx="26.8" cy="43.0" rx="3.9" ry="1.3" fill="#9ab058" opacity="0.7"/><ellipse cx="33.9" cy="30.6" rx="2.7" ry="0.9" fill="#a0a860" opacity="0.7"/><ellipse cx="44.0" cy="35.5" rx="2.2" ry="1.2" fill="#a0a860" opacity="0.7"/><ellipse cx="48.7" cy="45.5" rx="3.6" ry="1.1" fill="#9ab058" opacity="0.7"/><ellipse cx="35.0" cy="32.7" rx="3.6" ry="1.1" fill="#8aa848" opacity="0.7"/><ellipse cx="14.0" cy="29.6" rx="3.3" ry="0.8" fill="#5a8030" opacity="0.7"/><ellipse cx="40.6" cy="43.0" rx="3.6" ry="1.5" fill="#9ab058" opacity="0.7"/><ellipse cx="41.8" cy="40.1" rx="2.2" ry="1.4" fill="#5a8030" opacity="0.7"/><ellipse cx="12.7" cy="33.9" rx="2.1" ry="1.1" fill="#5a8030" opacity="0.7"/><ellipse cx="13.0" cy="47.5" rx="3.0" ry="1.3" fill="#9ab058" opacity="0.7"/><ellipse cx="25.8" cy="30.5" rx="1.8" ry="0.7" fill="#6a9038" opacity="0.7"/><ellipse cx="40.6" cy="51.8" rx="3.8" ry="1.3" fill="#6a9038" opacity="0.7"/><ellipse cx="1.1" cy="32.6" rx="2.2" ry="0.7" fill="#5a8030" opacity="0.7"/><ellipse cx="45.2" cy="49.7" rx="3.8" ry="0.7" fill="#a0a860" opacity="0.7"/><ellipse cx="18.6" cy="51.5" rx="1.7" ry="1.3" fill="#8aa848" opacity="0.7"/><ellipse cx="44.7" cy="43.7" rx="2.4" ry="1.3" fill="#6a9038" opacity="0.7"/><ellipse cx="37.7" cy="42.4" rx="2.3" ry="0.9" fill="#9ab058" opacity="0.7"/><ellipse cx="50.3" cy="29.6" rx="3.8" ry="1.4" fill="#a0a860" opacity="0.7"/><ellipse cx="18.1" cy="31.8" rx="2.1" ry="1.0" fill="#5a8030" opacity="0.7"/><ellipse cx="37.8" cy="29.6" rx="2.8" ry="0.7" fill="#6a9038" opacity="0.7"/><ellipse cx="17.5" cy="32.8" rx="3.9" ry="0.7" fill="#6a9038" opacity="0.7"/><ellipse cx="42.9" cy="41.4" rx="2.3" ry="1.4" fill="#a0a860" opacity="0.7"/><ellipse cx="24.9" cy="41.5" rx="3.8" ry="1.5" fill="#6a9038" opacity="0.7"/><ellipse cx="11.7" cy="33.2" rx="1.9" ry="0.7" fill="#5a8030" opacity="0.7"/><ellipse cx="3.2" cy="49.3" rx="3.0" ry="1.2" fill="#5a8030" opacity="0.7"/>
<ellipse cx="9.5" cy="29.2" rx="1.4" ry="1.1" fill="#2a2a22"/><ellipse cx="20.5" cy="29" rx="1.3" ry="1" fill="#3a3a30"/><ellipse cx="33" cy="29" rx="1.2" ry="1" fill="#5a5040"/><ellipse cx="37" cy="28.4" rx="1.3" ry="1" fill="#2a2a22"/>
</svg></div>
<div class="av" style="left:283px;top:239px;background:#1a2448"><svg width="52" height="52" viewBox="0 0 52 52" style="filter:blur(0.5px);">
<defs><linearGradient id="sky9" x1="0" y1="0" x2="0" y2="1"><stop offset="0" stop-color="#111a3c"/><stop offset="1" stop-color="#1e2e5c"/></linearGradient></defs>
<rect width="52" height="52" fill="url(#sky9)"/>
<path d="M0 22 Q14 10 26 11 Q40 12 52 22 L52 30 Q40 20 26 19 Q12 19 0 29Z" fill="#34447a" opacity="0.55"/>
<circle cx="24.1" cy="15.6" r="1.5" fill="#5a6a98" opacity="0.4"/><circle cx="24.1" cy="17.9" r="1.2" fill="#8898c0" opacity="0.5"/><circle cx="32.1" cy="20.4" r="1.3" fill="#4a5a88" opacity="0.7"/><circle cx="22.0" cy="17.6" r="0.7" fill="#5a6a98" opacity="0.3"/><circle cx="26.3" cy="20.3" r="1.4" fill="#4a5a88" opacity="0.6"/><circle cx="46.1" cy="21.4" r="1.5" fill="#7080b0" opacity="0.6"/><circle cx="37.7" cy="18.1" r="0.8" fill="#7080b0" opacity="0.5"/><circle cx="17.8" cy="18.2" r="0.5" fill="#5a6a98" opacity="0.7"/><circle cx="2.8" cy="21.0" r="0.5" fill="#4a5a88" opacity="0.6"/><circle cx="44.2" cy="24.6" r="1.6" fill="#5a6a98" opacity="0.3"/><circle cx="30.1" cy="18.7" r="0.5" fill="#5a6a98" opacity="0.4"/><circle cx="47.7" cy="22.8" r="1.1" fill="#4a5a88" opacity="0.5"/><circle cx="10.3" cy="21.8" r="1.3" fill="#7080b0" opacity="0.4"/><circle cx="31.7" cy="18.3" r="1.6" fill="#5a6a98" opacity="0.4"/><circle cx="35.5" cy="21.4" r="1.3" fill="#5a6a98" opacity="0.3"/><circle cx="36.7" cy="14.9" r="1.5" fill="#7080b0" opacity="0.4"/><circle cx="26.3" cy="16.2" r="1.1" fill="#5a6a98" opacity="0.6"/><circle cx="5.7" cy="16.3" r="1.5" fill="#8898c0" opacity="0.5"/><circle cx="20.9" cy="20.9" r="0.5" fill="#8898c0" opacity="0.3"/><circle cx="5.8" cy="21.7" r="0.7" fill="#8898c0" opacity="0.4"/><circle cx="4.6" cy="21.7" r="1.4" fill="#5a6a98" opacity="0.5"/><circle cx="29.1" cy="16.0" r="1.0" fill="#8898c0" opacity="0.6"/><circle cx="12.9" cy="18.8" r="0.8" fill="#4a5a88" opacity="0.5"/><circle cx="49.7" cy="22.0" r="1.1" fill="#7080b0" opacity="0.6"/><circle cx="8.9" cy="21.9" r="0.6" fill="#7080b0" opacity="0.4"/><circle cx="8.5" cy="18.9" r="0.6" fill="#7080b0" opacity="0.3"/><circle cx="3.2" cy="24.1" r="1.2" fill="#8898c0" opacity="0.4"/><circle cx="25.0" cy="19.6" r="0.8" fill="#5a6a98" opacity="0.6"/><circle cx="15.4" cy="20.5" r="0.7" fill="#4a5a88" opacity="0.5"/><circle cx="41.7" cy="23.1" r="1.2" fill="#8898c0" opacity="0.6"/><circle cx="45.8" cy="21.6" r="0.6" fill="#7080b0" opacity="0.4"/><circle cx="32.7" cy="17.7" r="0.6" fill="#7080b0" opacity="0.6"/><circle cx="10.6" cy="16.0" r="1.1" fill="#5a6a98" opacity="0.4"/><circle cx="25.1" cy="17.4" r="1.5" fill="#5a6a98" opacity="0.7"/><circle cx="1.5" cy="30.5" r="1.1" fill="#5a6a98" opacity="0.7"/><circle cx="29.8" cy="16.8" r="1.6" fill="#5a6a98" opacity="0.6"/><circle cx="37.5" cy="22.9" r="1.0" fill="#4a5a88" opacity="0.7"/><circle cx="37.8" cy="22.1" r="1.2" fill="#5a6a98" opacity="0.4"/><circle cx="45.7" cy="23.6" r="1.3" fill="#4a5a88" opacity="0.7"/><circle cx="1.9" cy="29.6" r="1.2" fill="#5a6a98" opacity="0.6"/><circle cx="21.1" cy="18.8" r="1.2" fill="#7080b0" opacity="0.3"/><circle cx="1.6" cy="25.0" r="1.2" fill="#4a5a88" opacity="0.3"/><circle cx="40.3" cy="17.7" r="0.5" fill="#4a5a88" opacity="0.5"/><circle cx="50.8" cy="30.3" r="1.6" fill="#7080b0" opacity="0.3"/><circle cx="18.1" cy="18.1" r="0.7" fill="#7080b0" opacity="0.3"/><circle cx="2.7" cy="28.8" r="0.6" fill="#5a6a98" opacity="0.4"/><circle cx="38.5" cy="16.0" r="0.9" fill="#5a6a98" opacity="0.4"/><circle cx="13.3" cy="19.6" r="1.1" fill="#7080b0" opacity="0.3"/><circle cx="13.2" cy="13.1" r="1.1" fill="#4a5a88" opacity="0.3"/><circle cx="13.1" cy="14.1" r="1.4" fill="#7080b0" opacity="0.6"/><circle cx="35.4" cy="19.0" r="0.7" fill="#8898c0" opacity="0.6"/><circle cx="46.9" cy="24.2" r="1.5" fill="#8898c0" opacity="0.7"/><circle cx="4.9" cy="21.6" r="1.2" fill="#4a5a88" opacity="0.5"/><circle cx="45.8" cy="25.1" r="1.5" fill="#4a5a88" opacity="0.4"/><circle cx="14.4" cy="14.5" r="1.1" fill="#4a5a88" opacity="0.5"/><circle cx="17.1" cy="18.7" r="0.6" fill="#5a6a98" opacity="0.4"/><circle cx="28.3" cy="18.7" r="1.2" fill="#7080b0" opacity="0.7"/><circle cx="4.5" cy="27.1" r="1.6" fill="#4a5a88" opacity="0.4"/><circle cx="28.2" cy="16.6" r="1.1" fill="#4a5a88" opacity="0.4"/><circle cx="37.8" cy="19.8" r="1.3" fill="#5a6a98" opacity="0.5"/><circle cx="0.2" cy="26.7" r="0.7" fill="#8898c0" opacity="0.3"/><circle cx="7.8" cy="20.2" r="0.7" fill="#5a6a98" opacity="0.5"/><circle cx="41.1" cy="15.9" r="0.9" fill="#7080b0" opacity="0.5"/><circle cx="18.6" cy="20.7" r="1.5" fill="#7080b0" opacity="0.4"/><circle cx="20.0" cy="18.9" r="1.5" fill="#7080b0" opacity="0.3"/><circle cx="35.6" cy="22.3" r="0.5" fill="#4a5a88" opacity="0.5"/><circle cx="39.2" cy="12.4" r="0.6" fill="#8898c0" opacity="0.4"/><circle cx="23.5" cy="20.4" r="1.2" fill="#7080b0" opacity="0.4"/><circle cx="7.6" cy="19.1" r="0.6" fill="#8898c0" opacity="0.7"/><circle cx="1.4" cy="19.8" r="0.7" fill="#5a6a98" opacity="0.5"/>
<path d="M13.2 30 L15 27.2 L37 27.2 L38.8 30Z" fill="#e8a434"/>
<rect x="14.5" y="30" width="23" height="1.8" fill="#3a5a8a"/>
<rect x="15" y="31.8" width="22" height="3.5" fill="#7a4a3a"/>
<rect x="3" y="34.5" width="46" height="3" fill="#6a4a40"/>
<rect x="3" y="37.5" width="46" height="2.8" fill="#f0b070"/>
<rect x="6" y="38" width="40" height="1.2" fill="#fff0d8"/>
<rect x="0" y="40.3" width="52" height="11.7" fill="#1a1c2a"/>
<rect x="9" y="40" width="1.6" height="12" fill="#c86a40"/><rect x="19" y="40" width="1.6" height="12" fill="#d07848"/><rect x="29" y="40" width="1.6" height="12" fill="#c87040"/><rect x="41.5" y="40" width="1.6" height="12" fill="#b86038"/>
</svg></div>
<div class="av" style="left:465px;top:239px;background:#d6bea6"><svg width="52" height="52" viewBox="0 0 52 52" style="filter:blur(0.5px);">
<rect width="52" height="52" fill="#d6bea6"/>
<path d="M4 12 Q8 10 12 14 M6 18 Q10 16 12 20" stroke="#f4ece0" stroke-width="1.5" fill="none"/>
<path d="M11 30 Q10 10 28 5 Q46 8 50 24 L50 40 Q44 30 40 32 L14 32Z" fill="#c79a72"/>
<circle cx="33.0" cy="12.3" r="1.6" fill="#cfa47c"/><circle cx="28.4" cy="10.6" r="1.3" fill="#cfa47c"/><circle cx="14.7" cy="22.4" r="1.1" fill="#a87a58"/><circle cx="10.7" cy="21.3" r="1.6" fill="#dab48e"/><circle cx="26.0" cy="7.0" r="1.3" fill="#cfa47c"/><circle cx="39.0" cy="13.3" r="1.1" fill="#cfa47c"/><circle cx="42.4" cy="27.1" r="1.0" fill="#b88a62"/><circle cx="21.0" cy="16.6" r="1.9" fill="#a87a58"/><circle cx="37.5" cy="19.1" r="1.7" fill="#dab48e"/><circle cx="27.4" cy="15.3" r="1.6" fill="#cfa47c"/><circle cx="46.2" cy="19.7" r="1.2" fill="#b88a62"/><circle cx="30.5" cy="7.2" r="1.7" fill="#b88a62"/><circle cx="15.6" cy="17.0" r="1.4" fill="#cfa47c"/><circle cx="12.7" cy="17.7" r="1.1" fill="#cfa47c"/><circle cx="37.8" cy="26.5" r="1.3" fill="#dab48e"/><circle cx="27.5" cy="8.5" r="1.1" fill="#cfa47c"/><circle cx="38.8" cy="22.3" r="1.3" fill="#cfa47c"/><circle cx="39.9" cy="18.2" r="1.3" fill="#dab48e"/><circle cx="18.0" cy="14.2" r="1.0" fill="#a87a58"/><circle cx="20.7" cy="15.9" r="1.4" fill="#cfa47c"/><circle cx="24.1" cy="6.9" r="1.7" fill="#cfa47c"/><circle cx="43.6" cy="13.4" r="1.3" fill="#dab48e"/><circle cx="32.2" cy="16.4" r="1.5" fill="#dab48e"/><circle cx="37.5" cy="23.6" r="1.5" fill="#a87a58"/><circle cx="31.8" cy="11.2" r="1.2" fill="#dab48e"/><circle cx="10.4" cy="17.7" r="1.8" fill="#b88a62"/><circle cx="27.5" cy="15.3" r="1.3" fill="#cfa47c"/><circle cx="15.9" cy="19.2" r="2.0" fill="#dab48e"/><circle cx="12.5" cy="15.9" r="1.8" fill="#dab48e"/><circle cx="23.9" cy="13.9" r="1.8" fill="#dab48e"/><circle cx="26.4" cy="8.9" r="1.9" fill="#cfa47c"/><circle cx="37.6" cy="17.6" r="1.0" fill="#cfa47c"/><circle cx="36.8" cy="12.5" r="1.8" fill="#dab48e"/><circle cx="18.8" cy="23.2" r="1.3" fill="#cfa47c"/><circle cx="42.0" cy="13.1" r="1.0" fill="#b88a62"/><circle cx="38.8" cy="26.8" r="1.7" fill="#cfa47c"/><circle cx="24.1" cy="12.2" r="1.8" fill="#a87a58"/><circle cx="16.3" cy="15.4" r="1.4" fill="#b88a62"/><circle cx="36.1" cy="16.0" r="2.0" fill="#dab48e"/><circle cx="27.6" cy="7.8" r="1.2" fill="#a87a58"/><circle cx="12.7" cy="17.5" r="1.0" fill="#dab48e"/><circle cx="37.0" cy="8.9" r="1.9" fill="#cfa47c"/><circle cx="15.7" cy="21.0" r="1.1" fill="#b88a62"/><circle cx="23.7" cy="12.8" r="1.4" fill="#cfa47c"/><circle cx="34.3" cy="14.8" r="1.7" fill="#dab48e"/>
<path d="M0 21 L13 20 L14 42 L0 42Z" fill="#efe6e6"/>
<path d="M0 22.5 L10.5 22.3 L10.5 24.7 L0 24.7Z" fill="#2a2424"/>
<path d="M12 28 Q12 15 25 14 Q40 14 41 26 Q42 34 40 36 L14 36 Q12 33 12 28Z" fill="#f2e8e6"/>
<path d="M20 15 Q26 12 32 15 L30 20 Q26 18 22 20Z" fill="#d8c4b4"/>
<ellipse cx="19.8" cy="21.6" rx="2.5" ry="2.3" fill="#3a2a22"/>
<ellipse cx="36" cy="21" rx="4.2" ry="2.6" fill="#4a3020"/>
<circle cx="36.8" cy="20.3" r="0.8" fill="#fff"/>
<ellipse cx="24.7" cy="26" rx="1.8" ry="1.3" fill="#e48a94"/>
<ellipse cx="16" cy="27.8" rx="3.8" ry="3" fill="#f6a4b4"/>
<ellipse cx="36.6" cy="28.5" rx="3.8" ry="3" fill="#f6a4b4"/>
<path d="M13 52 L13 34 Q20 30 28 31 Q40 32 43 38 L43 52Z" fill="#f4ecec"/>
<path d="M42 32 Q50 36 50 46 L44 50Z" fill="#a88262"/>
<path d="M5 37 Q8 42 6 46 M8 44 Q11 46 10 49" stroke="#9a6a40" stroke-width="2" fill="none"/>
<path d="M21 46 Q24 44 27 46 Q30 44 33 46 Q36 44 37 46" stroke="#f8f0c8" stroke-width="2.2" fill="none"/>
<circle cx="44" cy="19.8" r="1.3" fill="#f0d040"/>
</svg></div>
<div class="av" style="left:647px;top:239px;background:#a8ae9e"><svg width="52" height="52" viewBox="0 0 52 52" style="filter:blur(0.5px);">
<rect width="52" height="52" fill="#a8ae9e"/>
<ellipse cx="23.5" cy="16.8" rx="3.3" ry="1.4" fill="#6a7468" opacity="0.7"/><ellipse cx="44.5" cy="5.7" rx="3.1" ry="1.4" fill="#6a7468" opacity="0.7"/><ellipse cx="41.2" cy="2.8" rx="2.1" ry="0.9" fill="#8a9488" opacity="0.7"/><ellipse cx="31.0" cy="11.9" rx="2.4" ry="1.7" fill="#c8ccbc" opacity="0.7"/><ellipse cx="32.4" cy="25.0" rx="1.6" ry="0.8" fill="#c8ccbc" opacity="0.7"/><ellipse cx="31.2" cy="23.3" rx="2.2" ry="1.5" fill="#c8ccbc" opacity="0.7"/><ellipse cx="27.0" cy="19.2" rx="2.5" ry="1.6" fill="#b0b8a8" opacity="0.7"/><ellipse cx="34.0" cy="12.2" rx="2.6" ry="1.9" fill="#8a9488" opacity="0.7"/><ellipse cx="36.8" cy="9.5" rx="2.0" ry="1.1" fill="#8a9488" opacity="0.7"/><ellipse cx="29.3" cy="3.2" rx="1.7" ry="1.1" fill="#8a9488" opacity="0.7"/><ellipse cx="49.8" cy="25.4" rx="1.5" ry="1.1" fill="#8a9488" opacity="0.7"/><ellipse cx="24.4" cy="29.4" rx="2.3" ry="0.9" fill="#c8ccbc" opacity="0.7"/><ellipse cx="40.5" cy="8.1" rx="1.7" ry="1.2" fill="#b0b8a8" opacity="0.7"/><ellipse cx="39.4" cy="3.5" rx="2.0" ry="0.9" fill="#8a9488" opacity="0.7"/><ellipse cx="24.2" cy="14.6" rx="2.9" ry="1.0" fill="#6a7468" opacity="0.7"/><ellipse cx="9.9" cy="22.0" rx="1.8" ry="1.6" fill="#8a9488" opacity="0.7"/><ellipse cx="20.5" cy="29.7" rx="1.5" ry="1.8" fill="#6a7468" opacity="0.7"/><ellipse cx="15.8" cy="26.5" rx="1.9" ry="1.3" fill="#6a7468" opacity="0.7"/><ellipse cx="33.4" cy="3.0" rx="3.5" ry="1.1" fill="#9aa498" opacity="0.7"/><ellipse cx="0.5" cy="18.3" rx="3.2" ry="1.3" fill="#8a9488" opacity="0.7"/><ellipse cx="4.7" cy="17.5" rx="2.0" ry="1.5" fill="#9aa498" opacity="0.7"/><ellipse cx="32.4" cy="3.8" rx="2.7" ry="1.8" fill="#c8ccbc" opacity="0.7"/><ellipse cx="45.1" cy="5.5" rx="1.8" ry="1.9" fill="#6a7468" opacity="0.7"/><ellipse cx="13.0" cy="5.7" rx="3.0" ry="1.9" fill="#c8ccbc" opacity="0.7"/><ellipse cx="35.7" cy="11.6" rx="2.5" ry="0.9" fill="#8a9488" opacity="0.7"/><ellipse cx="5.4" cy="1.2" rx="3.4" ry="1.1" fill="#b0b8a8" opacity="0.7"/><ellipse cx="13.4" cy="24.7" rx="2.7" ry="1.2" fill="#c8ccbc" opacity="0.7"/><ellipse cx="48.3" cy="29.3" rx="1.8" ry="1.4" fill="#6a7468" opacity="0.7"/><ellipse cx="31.9" cy="8.4" rx="3.3" ry="1.0" fill="#8a9488" opacity="0.7"/><ellipse cx="3.6" cy="12.3" rx="2.0" ry="0.9" fill="#9aa498" opacity="0.7"/><ellipse cx="19.2" cy="17.2" rx="1.8" ry="1.2" fill="#b0b8a8" opacity="0.7"/><ellipse cx="51.0" cy="19.7" rx="2.9" ry="1.5" fill="#c8ccbc" opacity="0.7"/><ellipse cx="30.7" cy="27.7" rx="2.4" ry="1.2" fill="#9aa498" opacity="0.7"/><ellipse cx="50.1" cy="0.6" rx="2.8" ry="1.4" fill="#9aa498" opacity="0.7"/><ellipse cx="16.6" cy="30.0" rx="1.7" ry="1.5" fill="#8a9488" opacity="0.7"/><ellipse cx="46.8" cy="22.1" rx="2.9" ry="1.8" fill="#9aa498" opacity="0.7"/><ellipse cx="18.3" cy="20.6" rx="3.3" ry="1.8" fill="#b0b8a8" opacity="0.7"/><ellipse cx="49.1" cy="0.9" rx="2.5" ry="0.8" fill="#b0b8a8" opacity="0.7"/><ellipse cx="19.7" cy="0.4" rx="1.6" ry="0.9" fill="#8a9488" opacity="0.7"/><ellipse cx="51.7" cy="26.4" rx="3.0" ry="1.3" fill="#6a7468" opacity="0.7"/>
<path d="M0 26 Q6 20 14 24 L18 30 L18 46 L0 46Z" fill="#ae9052"/>
<path d="M4 28 Q10 26 16 32" stroke="#d0b070" stroke-width="1.2" fill="none"/>
<path d="M38 26 Q46 24 52 30 L52 44 L40 44Z" fill="#9aa090"/>
<path d="M15 30 Q13 12 17 5 Q24 0 33 1.5 Q40 4 41 14 Q42 24 42 34 L34 34 L34 22 L16 22Z" fill="#6a4634"/>
<path d="M17 16 Q16.5 6 24 5 Q32 5 32.5 14 L32.5 22 Q31 28 25 28.5 Q19 28.5 17.5 24Z" fill="#ecd2c0"/>
<ellipse cx="20.4" cy="21" rx="1.8" ry="1.5" fill="#e0909a"/>
<circle cx="24.7" cy="14.8" r="0.9" fill="#2a2020"/><circle cx="18.6" cy="15.4" r="0.7" fill="#2a2020"/>
<rect x="20.5" y="26" width="11" height="5" fill="#e2c6b2"/>
<path d="M6.7 52 Q6 34 18 30 L36 30 Q45 34 45.3 52Z" fill="#6c6270"/>
<path d="M26 30 L40 39 L38.5 42 L24.5 33Z" fill="#8a8a98"/>
<path d="M8 41 Q14 38 21 42 L21 51 L8 50Z" fill="#7c4c32"/>
<path d="M23 43 Q33 40 40 45 L38 52 L23 52Z" fill="#7c4c32"/>
<path d="M15.4 44 Q20 41 26.6 44 L26 50 Q20 51.5 15.4 49Z" fill="#e6c8b2"/>
</svg></div>
<div class="av" style="left:283px;top:342px;background:#98b4c0"><svg width="52" height="52" viewBox="0 0 52 52" style="filter:blur(0.5px);">
<defs><linearGradient id="sky12" x1="0" y1="0" x2="0" y2="1"><stop offset="0" stop-color="#9cc6ea"/><stop offset="0.42" stop-color="#d8e0e8"/><stop offset="0.52" stop-color="#e8d4cc"/><stop offset="0.58" stop-color="#c0d0d8"/><stop offset="1" stop-color="#a8bec6"/></linearGradient></defs>
<rect width="52" height="52" fill="url(#sky12)"/>
<path d="M14 36 L16 30 L19 27 L20.5 17 L22 10 L22.5 5 L24.7 4 L26 6 L26.2 10 L29.5 12 L30 20 L30.5 24 L33 27 L34 30 L38 31 L43 32 L49 34.5 L44 37 L30 37.5 Z" fill="#3a424a"/>
<path d="M22 14 L26 16 L28 22 M20 28 L26 30 L30 28" stroke="#5c6670" stroke-width="1" fill="none"/>
<rect x="0" y="37" width="52" height="15" fill="#b8cad0" opacity="0.5"/>
<path d="M24 52 L28 46 L34 45 L38 52Z" fill="#3a4248"/>
</svg></div>
<div class="av" style="left:465px;top:342px;background:#5e7a34"><svg width="52" height="52" viewBox="0 0 52 52" style="filter:blur(0.5px);">
<rect width="52" height="52" fill="#5e7a34"/>
<rect x="0" y="0" width="52" height="22" fill="#557030"/>
<ellipse cx="44" cy="26" rx="8" ry="5" fill="#90b050" opacity="0.8"/>
<ellipse cx="13.5" cy="40.6" rx="3.2" ry="2.3" fill="#a89868" opacity="0.7"/><ellipse cx="33.9" cy="40.0" rx="3.7" ry="2.0" fill="#a89868" opacity="0.7"/><ellipse cx="6.8" cy="35.9" rx="2.0" ry="1.4" fill="#c0b088" opacity="0.7"/><ellipse cx="6.6" cy="40.5" rx="4.0" ry="2.5" fill="#a89868" opacity="0.7"/><ellipse cx="4.4" cy="43.8" rx="3.7" ry="1.4" fill="#c0b088" opacity="0.7"/><ellipse cx="38.7" cy="48.5" rx="3.5" ry="1.4" fill="#a89868" opacity="0.7"/><ellipse cx="25.3" cy="42.7" rx="2.9" ry="1.6" fill="#8aa050" opacity="0.7"/><ellipse cx="46.2" cy="39.2" rx="3.1" ry="1.5" fill="#708a40" opacity="0.7"/><ellipse cx="41.5" cy="49.6" rx="3.2" ry="1.8" fill="#a89868" opacity="0.7"/><ellipse cx="22.9" cy="41.9" rx="2.8" ry="1.4" fill="#a89868" opacity="0.7"/><ellipse cx="27.2" cy="27.6" rx="2.6" ry="1.9" fill="#c0b088" opacity="0.7"/><ellipse cx="46.2" cy="37.3" rx="2.9" ry="1.8" fill="#a89868" opacity="0.7"/><ellipse cx="36.5" cy="23.9" rx="2.6" ry="1.9" fill="#c0b088" opacity="0.7"/><ellipse cx="20.3" cy="41.6" rx="3.8" ry="1.1" fill="#a89868" opacity="0.7"/><ellipse cx="25.9" cy="40.9" rx="2.6" ry="1.4" fill="#c0b088" opacity="0.7"/><ellipse cx="38.3" cy="27.5" rx="3.4" ry="1.5" fill="#8aa050" opacity="0.7"/><ellipse cx="27.1" cy="39.7" rx="3.8" ry="2.1" fill="#a89868" opacity="0.7"/><ellipse cx="37.6" cy="26.4" rx="3.0" ry="1.9" fill="#708a40" opacity="0.7"/><ellipse cx="2.0" cy="37.5" rx="2.9" ry="1.3" fill="#a89868" opacity="0.7"/><ellipse cx="8.6" cy="40.5" rx="1.8" ry="1.3" fill="#b0a078" opacity="0.7"/><ellipse cx="22.3" cy="37.9" rx="3.5" ry="2.0" fill="#c0b088" opacity="0.7"/><ellipse cx="42.9" cy="39.4" rx="2.8" ry="1.2" fill="#8aa050" opacity="0.7"/><ellipse cx="6.3" cy="29.0" rx="2.2" ry="1.9" fill="#b0a078" opacity="0.7"/><ellipse cx="48.8" cy="35.7" rx="3.6" ry="1.1" fill="#8aa050" opacity="0.7"/><ellipse cx="17.4" cy="34.9" rx="3.9" ry="1.8" fill="#c0b088" opacity="0.7"/><ellipse cx="11.6" cy="26.2" rx="3.5" ry="1.6" fill="#a89868" opacity="0.7"/><ellipse cx="38.4" cy="27.7" rx="3.2" ry="2.3" fill="#8aa050" opacity="0.7"/><ellipse cx="22.1" cy="27.1" rx="3.4" ry="1.9" fill="#c0b088" opacity="0.7"/><ellipse cx="10.6" cy="30.5" rx="1.6" ry="1.6" fill="#b0a078" opacity="0.7"/><ellipse cx="3.6" cy="21.4" rx="3.8" ry="2.0" fill="#8aa050" opacity="0.7"/><ellipse cx="9.9" cy="34.4" rx="2.9" ry="1.5" fill="#8aa050" opacity="0.7"/><ellipse cx="27.5" cy="48.5" rx="1.9" ry="1.1" fill="#8aa050" opacity="0.7"/><ellipse cx="42.8" cy="26.5" rx="2.3" ry="1.6" fill="#b0a078" opacity="0.7"/><ellipse cx="18.1" cy="23.0" rx="2.7" ry="1.9" fill="#708a40" opacity="0.7"/><ellipse cx="51.5" cy="21.3" rx="2.8" ry="1.2" fill="#b0a078" opacity="0.7"/><ellipse cx="16.8" cy="46.8" rx="2.9" ry="1.2" fill="#b0a078" opacity="0.7"/><ellipse cx="46.5" cy="47.4" rx="3.2" ry="1.1" fill="#8aa050" opacity="0.7"/><ellipse cx="3.7" cy="27.9" rx="3.6" ry="1.1" fill="#a89868" opacity="0.7"/><ellipse cx="34.7" cy="48.1" rx="2.8" ry="2.4" fill="#c0b088" opacity="0.7"/><ellipse cx="10.1" cy="31.8" rx="1.6" ry="1.8" fill="#b0a078" opacity="0.7"/><ellipse cx="6.0" cy="24.1" rx="2.8" ry="2.2" fill="#708a40" opacity="0.7"/><ellipse cx="20.6" cy="24.5" rx="2.9" ry="1.4" fill="#8aa050" opacity="0.7"/><ellipse cx="2.7" cy="20.9" rx="3.3" ry="1.2" fill="#8aa050" opacity="0.7"/><ellipse cx="45.0" cy="50.0" rx="3.5" ry="1.6" fill="#708a40" opacity="0.7"/><ellipse cx="50.9" cy="40.2" rx="3.3" ry="2.4" fill="#b0a078" opacity="0.7"/><ellipse cx="5.7" cy="29.3" rx="4.0" ry="1.7" fill="#8aa050" opacity="0.7"/><ellipse cx="7.8" cy="24.5" rx="2.3" ry="1.8" fill="#708a40" opacity="0.7"/><ellipse cx="13.5" cy="30.0" rx="3.8" ry="1.4" fill="#8aa050" opacity="0.7"/><ellipse cx="21.6" cy="49.8" rx="3.4" ry="1.7" fill="#8aa050" opacity="0.7"/><ellipse cx="8.1" cy="37.3" rx="3.9" ry="1.7" fill="#c0b088" opacity="0.7"/><ellipse cx="37.1" cy="44.9" rx="1.6" ry="2.4" fill="#c0b088" opacity="0.7"/><ellipse cx="42.7" cy="25.4" rx="1.8" ry="1.9" fill="#8aa050" opacity="0.7"/><ellipse cx="4.2" cy="47.1" rx="2.9" ry="2.1" fill="#b0a078" opacity="0.7"/><ellipse cx="11.1" cy="42.4" rx="3.1" ry="1.6" fill="#708a40" opacity="0.7"/><ellipse cx="1.1" cy="45.9" rx="1.9" ry="2.3" fill="#a89868" opacity="0.7"/><ellipse cx="33.8" cy="42.0" rx="2.6" ry="2.1" fill="#a89868" opacity="0.7"/><ellipse cx="25.3" cy="38.2" rx="2.1" ry="1.8" fill="#b0a078" opacity="0.7"/><ellipse cx="29.7" cy="46.8" rx="3.8" ry="2.0" fill="#708a40" opacity="0.7"/><ellipse cx="2.6" cy="41.0" rx="2.6" ry="2.4" fill="#b0a078" opacity="0.7"/><ellipse cx="5.2" cy="47.4" rx="3.8" ry="2.2" fill="#a89868" opacity="0.7"/><rect x="35.4" y="0" width="1.8" height="52" fill="#9aa858" opacity="0.7"/><rect x="4.8" y="0" width="1.8" height="52" fill="#4a6028" opacity="0.9"/><rect x="31.0" y="0" width="0.9" height="52" fill="#9aa858" opacity="0.7"/><rect x="38.2" y="0" width="0.8" height="52" fill="#c0b070" opacity="1.0"/><rect x="19.8" y="0" width="1.9" height="52" fill="#c0b070" opacity="0.9"/><rect x="26.7" y="0" width="0.9" height="52" fill="#c0b070" opacity="0.8"/><rect x="14.6" y="0" width="1.3" height="52" fill="#a8a460" opacity="1.0"/><rect x="35.5" y="0" width="1.3" height="52" fill="#a8a460" opacity="0.9"/><rect x="48.4" y="0" width="1.2" height="52" fill="#a8a460" opacity="1.0"/><rect x="23.3" y="0" width="1.4" height="52" fill="#3e5424" opacity="1.0"/><rect x="3.2" y="0" width="1.2" height="52" fill="#a8a460" opacity="0.7"/><rect x="16.9" y="0" width="1.2" height="52" fill="#3e5424" opacity="0.7"/><rect x="48.5" y="0" width="1.2" height="52" fill="#4a6028" opacity="0.9"/><rect x="45.6" y="0" width="1.8" height="52" fill="#9aa858" opacity="0.7"/><rect x="3.5" y="0" width="1.3" height="52" fill="#4a6028" opacity="0.7"/><rect x="51.6" y="0" width="1.0" height="52" fill="#4a6028" opacity="0.6"/><rect x="12.0" y="0" width="1.6" height="52" fill="#4a6028" opacity="0.9"/><rect x="36.9" y="0" width="1.8" height="52" fill="#c0b070" opacity="0.9"/>
<ellipse cx="25.2" cy="13" rx="5.4" ry="3.8" fill="#161616"/>
<path d="M19.8 16 Q20 13.5 25 13.5 Q29.7 13.5 29.7 17 L29.5 22 Q28.5 26.6 24.5 26.6 Q20.5 26.6 20 22Z" fill="#d8ae94"/>
<path d="M18.5 49 L18.7 30 Q19.5 25.5 24 25.5 Q31 25.5 34 29 L35.3 40 L35 50Z" fill="#767a84"/>
<path d="M18.5 50 L18.7 30 Q20 26 24 27 L25 50Z" fill="#cfd2d8"/>
<rect x="21" y="25" width="8" height="2.8" fill="#2a2e40"/>
<path d="M29 27.5 L31 26 Q35 30 37.5 34 Q39.5 38 38.5 40 L34.5 40.5 Q31.5 35 30 31Z" fill="#30344a"/>
<ellipse cx="30.5" cy="27.5" rx="1.9" ry="2.6" fill="#d8ae94"/>
<rect x="19" y="48" width="16" height="4" fill="#1e1e1e"/>
</svg></div>
</div>

<!-- LABELS -->
<div id="labels">
<div class="lab" style="left:37px;top:105.5px;width:27px"><svg class="mic" width="7" height="9" viewBox="0 0 7 9" style="top:1.5px"><rect x="2" y="0.5" width="3" height="5.5" rx="1.5" fill="#fff"/><path d="M0.8 4.2 q0.2 3.2 2.7 3.2 q2.5 0 2.7 -3.2" stroke="#fff" stroke-width="1" fill="none"/><path d="M1.8 5.2 q1.7 2 3.4 0 v0.6 q-1.7 1.4 -3.4 0z" fill="#2bd36b"/><line x1="3.5" y1="7.4" x2="3.5" y2="8.6" stroke="#fff" stroke-width="1"/></svg>杨华</div>
<div class="lab" style="left:231px;top:105.5px;width:28px"><svg class="mic" width="8" height="9" viewBox="0 0 8 9" style="top:1.5px;left:0.5px"><rect x="1.3" y="0.2" width="3.2" height="5" rx="1.6" fill="#ffffff" transform="rotate(40 2.9 2.7)"/><path d="M1.8 6.6 q1.6 1.6 3.4 0.8 q1.6 -0.8 2 -2.6" stroke="#e0f2f2" stroke-width="1.3" fill="none"/><line x1="0.2" y1="7.6" x2="6.2" y2="1" stroke="#e02a20" stroke-width="1"/></svg>崔玮</div>
<div class="lab" style="left:400px;top:105.5px;width:27px"><svg class="mic" width="8" height="9" viewBox="0 0 8 9" style="top:1.5px;left:0.5px"><rect x="1.3" y="0.2" width="3.2" height="5" rx="1.6" fill="#ffffff" transform="rotate(40 2.9 2.7)"/><path d="M1.8 6.6 q1.6 1.6 3.4 0.8 q1.6 -0.8 2 -2.6" stroke="#e0f2f2" stroke-width="1.3" fill="none"/><line x1="0.2" y1="7.6" x2="6.2" y2="1" stroke="#e02a20" stroke-width="1"/></svg>孙玲</div>
<div class="lab" style="left:582px;top:105.5px;width:27px"><svg class="mic" width="8" height="9" viewBox="0 0 8 9" style="top:1.5px;left:0.5px"><rect x="1.3" y="0.2" width="3.2" height="5" rx="1.6" fill="#ffffff" transform="rotate(40 2.9 2.7)"/><path d="M1.8 6.6 q1.6 1.6 3.4 0.8 q1.6 -0.8 2 -2.6" stroke="#e0f2f2" stroke-width="1.3" fill="none"/><line x1="0.2" y1="7.6" x2="6.2" y2="1" stroke="#e02a20" stroke-width="1"/></svg>郝昵</div>
<div class="lab" style="left:37px;top:208px;width:19px"><svg class="mic" width="8" height="9" viewBox="0 0 8 9" style="top:1.5px;left:0.5px"><rect x="1.3" y="0.2" width="3.2" height="5" rx="1.6" fill="#ffffff" transform="rotate(40 2.9 2.7)"/><path d="M1.8 6.6 q1.6 1.6 3.4 0.8 q1.6 -0.8 2 -2.6" stroke="#e0f2f2" stroke-width="1.3" fill="none"/><line x1="0.2" y1="7.6" x2="6.2" y2="1" stroke="#e02a20" stroke-width="1"/></svg>桑</div>
<div class="lab" style="left:219px;top:208px;width:42px"><svg class="mic" width="8" height="9" viewBox="0 0 8 9" style="top:1.5px;left:0.5px"><rect x="1.3" y="0.2" width="3.2" height="5" rx="1.6" fill="#ffffff" transform="rotate(40 2.9 2.7)"/><path d="M1.8 6.6 q1.6 1.6 3.4 0.8 q1.6 -0.8 2 -2.6" stroke="#e0f2f2" stroke-width="1.3" fill="none"/><line x1="0.2" y1="7.6" x2="6.2" y2="1" stroke="#e02a20" stroke-width="1"/></svg><span style="font-size:9.5px;letter-spacing:0">692</span>赵平</div>
<div class="lab" style="left:400px;top:208px;width:36px"><svg class="mic" width="8" height="9" viewBox="0 0 8 9" style="top:1.5px;left:0.5px"><rect x="1.3" y="0.2" width="3.2" height="5" rx="1.6" fill="#ffffff" transform="rotate(40 2.9 2.7)"/><path d="M1.8 6.6 q1.6 1.6 3.4 0.8 q1.6 -0.8 2 -2.6" stroke="#e0f2f2" stroke-width="1.3" fill="none"/><line x1="0.2" y1="7.6" x2="6.2" y2="1" stroke="#e02a20" stroke-width="1"/></svg>傅润瑶</div>
<div class="lab" style="left:582px;top:208px;width:89px"><svg class="mic" width="8" height="9" viewBox="0 0 8 9" style="top:1.5px;left:0.5px"><rect x="1.3" y="0.2" width="3.2" height="5" rx="1.6" fill="#ffffff" transform="rotate(40 2.9 2.7)"/><path d="M1.8 6.6 q1.6 1.6 3.4 0.8 q1.6 -0.8 2 -2.6" stroke="#e0f2f2" stroke-width="1.3" fill="none"/><line x1="0.2" y1="7.6" x2="6.2" y2="1" stroke="#e02a20" stroke-width="1"/></svg>樊养才·西北政法大学</div>
<div class="lab" style="left:37px;top:310.5px;width:85px"><svg class="mic" width="8" height="9" viewBox="0 0 8 9" style="top:1.5px;left:0.5px"><rect x="1.3" y="0.2" width="3.2" height="5" rx="1.6" fill="#ffffff" transform="rotate(40 2.9 2.7)"/><path d="M1.8 6.6 q1.6 1.6 3.4 0.8 q1.6 -0.8 2 -2.6" stroke="#e0f2f2" stroke-width="1.3" fill="none"/><line x1="0.2" y1="7.6" x2="6.2" y2="1" stroke="#e02a20" stroke-width="1"/></svg>余瑞（外国语学院）</div>
<div class="lab" style="left:219px;top:310.5px;width:27px"><svg class="mic" width="8" height="9" viewBox="0 0 8 9" style="top:1.5px;left:0.5px"><rect x="1.3" y="0.2" width="3.2" height="5" rx="1.6" fill="#ffffff" transform="rotate(40 2.9 2.7)"/><path d="M1.8 6.6 q1.6 1.6 3.4 0.8 q1.6 -0.8 2 -2.6" stroke="#e0f2f2" stroke-width="1.3" fill="none"/><line x1="0.2" y1="7.6" x2="6.2" y2="1" stroke="#e02a20" stroke-width="1"/></svg>陈河</div>
<div class="lab" style="left:400px;top:310.5px;width:27px"><svg class="mic" width="8" height="9" viewBox="0 0 8 9" style="top:1.5px;left:0.5px"><rect x="1.3" y="0.2" width="3.2" height="5" rx="1.6" fill="#ffffff" transform="rotate(40 2.9 2.7)"/><path d="M1.8 6.6 q1.6 1.6 3.4 0.8 q1.6 -0.8 2 -2.6" stroke="#e0f2f2" stroke-width="1.3" fill="none"/><line x1="0.2" y1="7.6" x2="6.2" y2="1" stroke="#e02a20" stroke-width="1"/></svg>马婧</div>
<div class="lab" style="left:582px;top:310.5px;width:35.5px"><svg class="mic" width="8" height="9" viewBox="0 0 8 9" style="top:1.5px;left:0.5px"><rect x="1.3" y="0.2" width="3.2" height="5" rx="1.6" fill="#ffffff" transform="rotate(40 2.9 2.7)"/><path d="M1.8 6.6 q1.6 1.6 3.4 0.8 q1.6 -0.8 2 -2.6" stroke="#e0f2f2" stroke-width="1.3" fill="none"/><line x1="0.2" y1="7.6" x2="6.2" y2="1" stroke="#e02a20" stroke-width="1"/></svg>吴小洁</div>
<div class="lab" style="left:219px;top:413px;width:35px"><svg class="mic" width="8" height="9" viewBox="0 0 8 9" style="top:1.5px;left:0.5px"><rect x="1.3" y="0.2" width="3.2" height="5" rx="1.6" fill="#ffffff" transform="rotate(40 2.9 2.7)"/><path d="M1.8 6.6 q1.6 1.6 3.4 0.8 q1.6 -0.8 2 -2.6" stroke="#e0f2f2" stroke-width="1.3" fill="none"/><line x1="0.2" y1="7.6" x2="6.2" y2="1" stroke="#e02a20" stroke-width="1"/></svg>郑秋峰</div>
<div class="lab" style="left:400px;top:413px;width:23px"><svg class="mic" width="8" height="9" viewBox="0 0 8 9" style="top:1.5px;left:0.5px"><rect x="1.3" y="0.2" width="3.2" height="5" rx="1.6" fill="#ffffff" transform="rotate(40 2.9 2.7)"/><path d="M1.8 6.6 q1.6 1.6 3.4 0.8 q1.6 -0.8 2 -2.6" stroke="#e0f2f2" stroke-width="1.3" fill="none"/><line x1="0.2" y1="7.6" x2="6.2" y2="1" stroke="#e02a20" stroke-width="1"/></svg><span style="font-size:8.6px;letter-spacing:0">Yin</span></div>
<div class="abs" style="left:219px;top:105px;width:12px;height:12px;background:#ff7a0f"><svg width="12" height="12" viewBox="0 0 12 12"><circle cx="6" cy="4" r="1.8" fill="#fff"/><path d="M2.6 9.6 q0.3 -3.2 3.4 -3.2 q3.1 0 3.4 3.2z" fill="#fff"/></svg></div>
</div>


<!--EXTRA--><div class="abs" style="left:654px;top:89px;width:127px;height:18px;border-radius:2.5px;background:#3b3e42">
<svg class="abs" style="left:5px;top:4px" width="9" height="10" viewBox="0 0 9 10"><path d="M3.5 1 h2 a1.5 1.5 0 0 1 1.5 1.5 v2.5 a2.5 2.5 0 0 1 -5 0 v-2.5 a1.5 1.5 0 0 1 1.5 -1.5z" fill="#8e9196"/><path d="M1 5.5 q0.5 3 3.5 3 q3 0 3.5 -3" stroke="#8e9196" stroke-width="0.8" fill="none"/><line x1="1" y1="9" x2="8" y2="1.5" stroke="#d83a30" stroke-width="1"/></svg>
<div class="abs" style="left:18px;top:3px;width:0.8px;height:12px;background:#2c2e31"></div>
<div class="abs" style="left:22px;top:4px;font-size:6.5px;line-height:10px;color:#e6e6e6;white-space:nowrap">正在讲话: 杨华</div>
<svg class="abs" style="left:0;top:0" width="127" height="18" viewBox="654 89 127 18"><path d="M735 101.3 L741.3 94.3" stroke="#5a5d61" stroke-width="4.6" stroke-linecap="round"/><path d="M743.6 101.3 L749.6 94.6 L755.6 101.3" stroke="#5a5d61" stroke-width="4.6" stroke-linecap="round" stroke-linejoin="round" fill="none"/></svg>
</div>
<svg class="abs" style="left:0;top:340px" width="25" height="25" viewBox="0 340 25 25">
<rect x="4.6" y="349" width="1.4" height="1.4" fill="#ddd"/><rect x="7.6" y="349" width="6" height="1.4" fill="#eee"/>
<rect x="6.4" y="352.2" width="1.4" height="1.4" fill="#bbb"/><rect x="8.8" y="352.2" width="4.8" height="1.4" fill="#eee"/>
<rect x="4.6" y="355.2" width="1.4" height="1.4" fill="#ddd"/><rect x="7.6" y="355.2" width="6" height="1.4" fill="#eee"/>
</svg><!--/EXTRA-->
<div id="task" class="abs">
<div class="abs" style="left:0;top:0;width:800px;height:1px;background:rgba(255,255,255,0.5)"></div>
<svg class="abs" style="left:0;top:0" width="800" height="25" viewBox="0 425 800 25">
<defs>
<linearGradient id="win" x1="0" y1="0" x2="1" y2="1"><stop offset="0" stop-color="#3ec4f4"/><stop offset="1" stop-color="#1a78d8"/></linearGradient>
<linearGradient id="fold" x1="0" y1="0" x2="0" y2="1"><stop offset="0" stop-color="#ffd35a"/><stop offset="1" stop-color="#f4b020"/></linearGradient>
</defs>
<!-- start -->
<rect x="290.7" y="431.7" width="5.9" height="5.9" fill="url(#win)"/><rect x="297.3" y="431.7" width="5.9" height="5.9" fill="url(#win)"/>
<rect x="290.7" y="438.3" width="5.9" height="5.9" fill="url(#win)"/><rect x="297.3" y="438.3" width="5.9" height="5.9" fill="url(#win)"/>
<!-- search -->
<circle cx="321.3" cy="436.2" r="3.9" fill="none" stroke="#1a1a1a" stroke-width="1.4"/>
<line x1="318.4" y1="439.2" x2="314.8" y2="443" stroke="#1a1a1a" stroke-width="1.6"/>
<!-- task view -->
<rect x="336.5" y="436" width="8" height="7.5" fill="#161616"/>
<rect x="339" y="433" width="9" height="8" fill="#d2d2d2"/>
<rect x="343" y="433" width="5" height="4" fill="#ececec"/>
<!-- widgets -->
<rect x="360" y="432" width="12" height="11.5" rx="1.5" fill="#1e5fb8"/>
<rect x="361.5" y="433.5" width="4.5" height="8.5" fill="#fff"/>
<rect x="366.8" y="433.5" width="4" height="4" fill="#7ec8f4"/>
<rect x="366.8" y="438" width="4" height="4" fill="#3a9ae8"/>
<!-- explorer -->
<path d="M382 433.5 h5 l1.2 1.2 h7.3 v9.3 h-13.5z" fill="#e8a820"/>
<rect x="382" y="435.5" width="13.5" height="8.5" fill="url(#fold)"/>
<rect x="385" y="440" width="7.5" height="2.2" fill="#2a78d0"/>
<!-- store -->
<path d="M405.5 434 h12.5 v8 q0 1.5 -1.5 1.5 h-9.5 q-1.5 0 -1.5 -1.5z" fill="#1a3e78"/>
<path d="M408.6 433.8 q0 -2.6 3.1 -2.6 q3.1 0 3.1 2.6" fill="none" stroke="#4aa8e8" stroke-width="1.6"/>
<rect x="409.2" y="436" width="2.2" height="2.2" fill="#f25022"/><rect x="412" y="436" width="2.2" height="2.2" fill="#7fba00"/>
<rect x="409.2" y="438.8" width="2.2" height="2.2" fill="#00a4ef"/><rect x="412" y="438.8" width="2.2" height="2.2" fill="#ffb900"/>
<!-- mail -->
<path d="M428 435.5 L434.7 431 L441.4 435.5 Z" fill="#1a5ab0"/>
<path d="M429.2 435.3 L440.2 435.3 L434.7 438.8 Z" fill="#ffffff"/>
<path d="M428 435.5 L434.7 440 L441.4 435.5 L441.4 443 L428 443 Z" fill="#2a9ae8"/>
<path d="M428 443 L434.7 438.5 L441.4 443 Z" fill="#4ab4f4" opacity="0.6"/>
<!-- wechat -->
<rect x="451" y="431" width="13" height="13" fill="#1aad19"/>
<ellipse cx="456" cy="436" rx="3.4" ry="2.8" fill="#fff"/>
<ellipse cx="459.5" cy="439.5" rx="3.2" ry="2.6" fill="#fff" stroke="#1aad19" stroke-width="0.6"/>
<!-- sogou -->
<circle cx="480.3" cy="437.6" r="6.3" fill="#fdfbf0"/>
<circle cx="480.3" cy="437.6" r="5.6" fill="#2a7ae2"/>
<path d="M482.8 433.6 q-1.6 -1.3 -3.3 -0.6 q-2.2 1 -0.6 3 l2.2 2.2 q1.6 1.9 -0.5 3 q-2 0.8 -3.6 -0.6" fill="none" stroke="#fff" stroke-width="1.5"/>
<rect x="479.5" y="445.8" width="2" height="1" fill="#555"/>
<!-- tencent meeting -->
<rect x="493" y="428" width="18" height="20" rx="2" fill="#f6f9f2" opacity="0.8"/>
<rect x="497.5" y="431.5" width="11.5" height="11.5" rx="2" fill="#0a6cf0"/>
<g transform="translate(498.8 434.6) scale(0.37) translate(-733 -92)"><path d="M735 101.3 L741.3 94.3" stroke="#fff" stroke-width="4.8" stroke-linecap="round"/><path d="M743.6 101.3 L749.6 94.6 L755.6 101.3" stroke="#fff" stroke-width="4.8" stroke-linecap="round" stroke-linejoin="round" fill="none"/></g>
<rect x="499" y="446" width="8" height="1.5" rx="0.7" fill="#1a6ad8"/>
<!-- tray -->
<path d="M647.5 439.8 l3.6 -3.8 l3.6 3.8" fill="none" stroke="#333" stroke-width="1"/>
<path d="M659 440.5 h8.3 q1.3 0 1.3 -1.6 q0 -1.5 -1.6 -1.6 q-0.6 -2.4 -3 -2.4 q-2.4 0 -3.1 1.9 q-2.1 0.1 -2.1 2 q0 1.7 0.2 1.7z" fill="#7a7c7c"/>
<rect x="661" y="439" width="6" height="0.9" fill="#e8f0ee"/>
<rect x="676.3" y="433.2" width="3.4" height="5.8" rx="1.7" fill="#3a88d0"/>
<path d="M675.2 437 q0 3.6 2.8 3.6 q2.8 0 2.8 -3.6 M678 440.6 v1.2" fill="none" stroke="#3a88d0" stroke-width="0.9"/>
<path d="M707 435.8 q4.5 -3.5 9 0 l-4.5 4.6z" fill="#7a7c7c"/>
<path d="M719.3 436.6 h1.7 l2.3 -1.9 v6.2 l-2.3 -1.9 h-1.7z" fill="none" stroke="#555" stroke-width="0.8"/>
<path d="M724.8 435.5 q1.1 2.3 0 4.6 M726.8 434.8 q1.8 3 0 6" fill="none" stroke="#555" stroke-width="0.9"/>
<path d="M732 435.5 l2 1.5 q2.5 -2 4.5 -0.5 l3 1.5 v2 l-2 1 h-5.5 z" fill="#1a1a1a"/>
<circle cx="733.3" cy="435" r="1.3" fill="#1a1a1a"/>
<circle cx="785.2" cy="437.8" r="4.3" fill="#1a6ad8"/>
<text x="785.2" y="439.9" font-size="5.5" fill="#fff" text-anchor="middle" font-family="Liberation Sans">1</text>
</svg>
<div class="abs" style="left:689px;top:7px;width:11px;text-align:center;font-size:8px;line-height:9px;color:#444">中</div>
<div class="abs" style="left:726px;top:4.5px;width:50px;text-align:right;font-size:6.5px;line-height:8px;color:#333">10:02<br>2022/1/15</div>
</div>
</body></html>
